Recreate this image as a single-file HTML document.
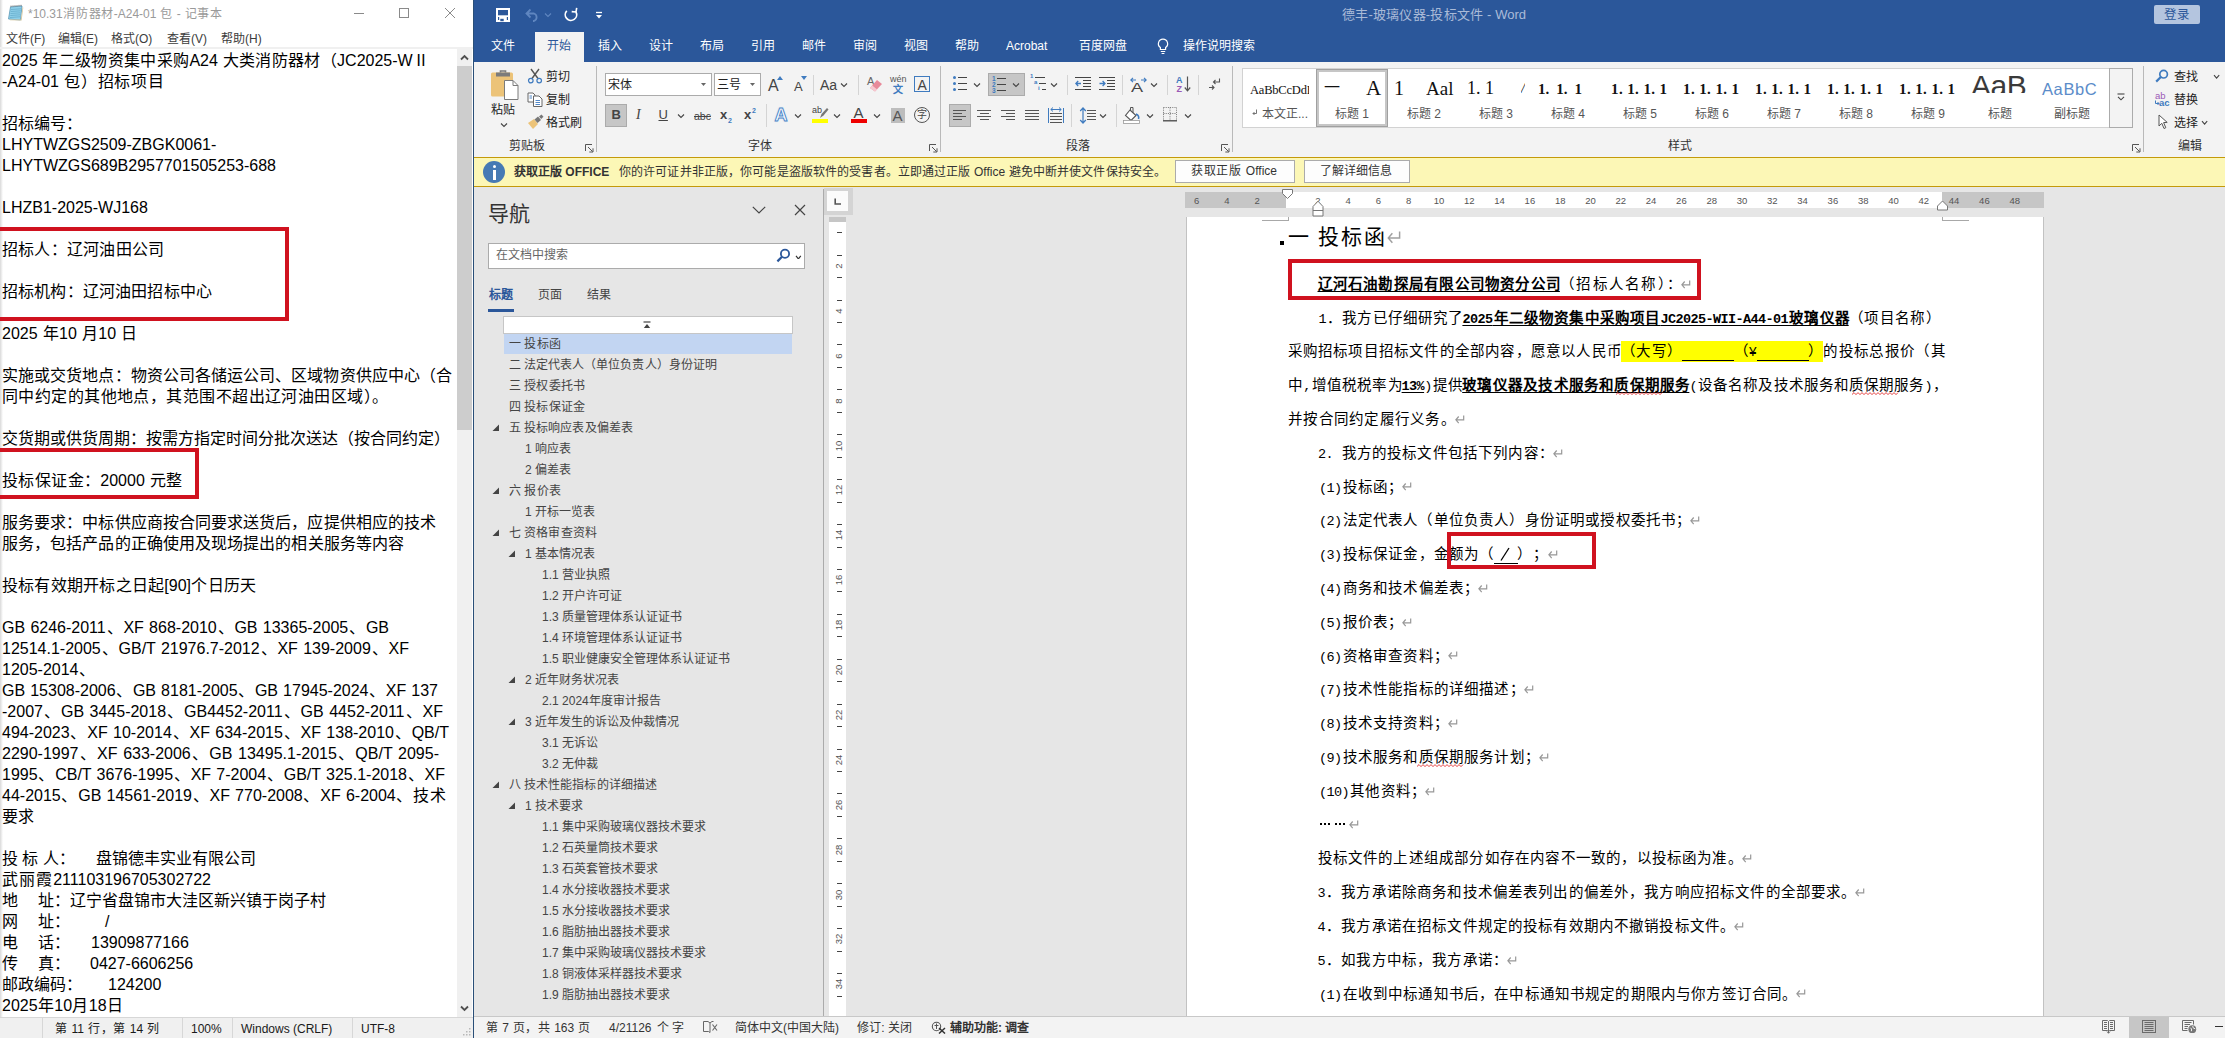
<!DOCTYPE html>
<html lang="zh-CN"><head><meta charset="utf-8"><title>screenshot</title>
<style>
html,body{margin:0;padding:0;}
body{width:2225px;height:1038px;position:relative;overflow:hidden;background:#fff;font-family:"Liberation Sans",sans-serif;}
body div,body svg{position:absolute;}
.t{white-space:nowrap;overflow:visible;}
.s{font-family:"Liberation Mono",monospace;font-size:13.5px;letter-spacing:-0.6px;}
</style></head><body>
<div style="left:0px;top:0px;width:473px;height:1038px;background:#fff;"></div>
<div style="left:0px;top:0px;width:3px;height:1038px;background:linear-gradient(90deg,#d9d9d9,#fff);"></div>
<svg style="left:7px;top:4px;" width="17" height="18" viewBox="0 0 17 18"><path d="M3.5 3 L15 2 L13.5 16 L1.5 15 Z" fill="#8fd0ea" stroke="#5a97b5" stroke-width="0.8"/><path d="M13.8 15.6 L15.6 3.2 L16.3 3.6 L14.6 16.6 L3 16.2 L2.6 15.4 Z" fill="#d8c9a0"/><path d="M4 5.5 L14 4.8 M3.8 7.5 L13.8 6.8 M3.5 9.5 L13.5 8.8 M3.3 11.5 L13.3 10.8 M3 13.5 L13 12.8" stroke="#5fa6c6" stroke-width="0.7"/><path d="M4 3 V1.6 M6 2.8 V1.4 M8 2.6 V1.2 M10 2.5 V1.1 M12 2.3 V0.9 M14 2.2 V0.8" stroke="#666" stroke-width="0.8"/></svg>
<div class="t" style="left:28px;top:5px;font-size:12px;line-height:18px;height:18px;color:#9a9a9a;width:194px;text-align-last:justify;">*10.31消防器材-A24-01 包 - 记事本</div>
<div style="left:354px;top:13px;width:10px;height:1px;background:#8a8a8a;"></div>
<div style="left:399px;top:8px;width:10px;height:10px;border:1px solid #8a8a8a;box-sizing:border-box;"></div>
<svg style="left:444px;top:7px;" width="12" height="12" viewBox="0 0 12 12"><path d="M1 1 L11 11 M11 1 L1 11" stroke="#8a8a8a" stroke-width="1" fill="none"/></svg>
<div class="t" style="left:6px;top:29.5px;font-size:12px;line-height:18px;height:18px;color:#3c3c3c;width:37px;text-align-last:justify;">文件(F)</div>
<div class="t" style="left:58px;top:29.5px;font-size:12px;line-height:18px;height:18px;color:#3c3c3c;width:38px;text-align-last:justify;">编辑(E)</div>
<div class="t" style="left:111px;top:29.5px;font-size:12px;line-height:18px;height:18px;color:#3c3c3c;width:41px;text-align-last:justify;">格式(O)</div>
<div class="t" style="left:167px;top:29.5px;font-size:12px;line-height:18px;height:18px;color:#3c3c3c;width:39px;text-align-last:justify;">查看(V)</div>
<div class="t" style="left:221px;top:29.5px;font-size:12px;line-height:18px;height:18px;color:#3c3c3c;width:40px;text-align-last:justify;">帮助(H)</div>
<div style="left:0px;top:47px;width:473px;height:2px;background:#f0f0f0;"></div>
<div style="left:457px;top:49px;width:15px;height:968px;background:#f0f0f0;"></div>
<div style="left:457px;top:66px;width:15px;height:364px;background:#cdcdcd;"></div>
<svg style="left:460px;top:54px;" width="9" height="7" viewBox="0 0 9 7"><path d="M1 5.5 L4.5 2 L8 5.5" fill="none" stroke="#505050" stroke-width="1.8"/></svg>
<svg style="left:460px;top:1005px;" width="9" height="7" viewBox="0 0 9 7"><path d="M1 1.5 L4.5 5 L8 1.5" fill="none" stroke="#505050" stroke-width="1.8"/></svg>
<div class="t" style="left:2px;top:49.5px;font-size:16px;line-height:21px;height:21px;color:#000;width:427px;text-align-last:justify;">2025 年二级物资集中采购A24 大类消防器材（JC2025-WⅡ</div>
<div class="t" style="left:2px;top:70.5px;font-size:16px;line-height:21px;height:21px;color:#000;width:162px;text-align-last:justify;">-A24-01 包）招标项目</div>
<div class="t" style="width:80.3px;text-align-last:justify;left:2px;top:112.5px;font-size:16px;line-height:21px;height:21px;color:#000;">招标编号：</div>
<div class="t" style="left:2px;top:133.5px;font-size:16px;line-height:21px;height:21px;color:#000;">LHYTWZGS2509-ZBGK0061-</div>
<div class="t" style="left:2px;top:154.5px;font-size:16px;line-height:21px;height:21px;color:#000;">LHYTWZGS689B2957701505253-688</div>
<div class="t" style="left:2px;top:196.5px;font-size:16px;line-height:21px;height:21px;color:#000;">LHZB1-2025-WJ168</div>
<div class="t" style="left:2px;top:238.5px;font-size:16px;line-height:21px;height:21px;color:#000;width:162px;text-align-last:justify;">招标人：辽河油田公司</div>
<div class="t" style="left:2px;top:280.5px;font-size:16px;line-height:21px;height:21px;color:#000;width:210px;text-align-last:justify;">招标机构：辽河油田招标中心</div>
<div class="t" style="left:2px;top:322.5px;font-size:16px;line-height:21px;height:21px;color:#000;width:135px;text-align-last:justify;">2025 年10 月10 日</div>
<div class="t" style="left:2px;top:364.5px;font-size:16px;line-height:21px;height:21px;color:#000;width:450px;text-align-last:justify;">实施或交货地点：物资公司各储运公司、区域物资供应中心（合</div>
<div class="t" style="left:2px;top:385.5px;font-size:16px;line-height:21px;height:21px;color:#000;width:386px;text-align-last:justify;">同中约定的其他地点，其范围不超出辽河油田区域）。</div>
<div class="t" style="width:448.3px;text-align-last:justify;left:2px;top:427.5px;font-size:16px;line-height:21px;height:21px;color:#000;">交货期或供货周期：按需方指定时间分批次送达（按合同约定）</div>
<div class="t" style="left:2px;top:469.5px;font-size:16px;line-height:21px;height:21px;color:#000;width:180px;text-align-last:justify;">投标保证金：20000 元整</div>
<div class="t" style="left:2px;top:511.5px;font-size:16px;line-height:21px;height:21px;color:#000;width:434px;text-align-last:justify;">服务要求：中标供应商按合同要求送货后，应提供相应的技术</div>
<div class="t" style="left:2px;top:532.5px;font-size:16px;line-height:21px;height:21px;color:#000;width:402px;text-align-last:justify;">服务，包括产品的正确使用及现场提出的相关服务等内容</div>
<div class="t" style="left:2px;top:574.5px;font-size:16px;line-height:21px;height:21px;color:#000;width:254px;text-align-last:justify;">投标有效期开标之日起[90]个日历天</div>
<div class="t" style="left:2px;top:616.5px;font-size:16px;line-height:21px;height:21px;color:#000;width:387px;text-align-last:justify;">GB 6246-2011、XF 868-2010、GB 13365-2005、GB</div>
<div class="t" style="left:2px;top:637.5px;font-size:16px;line-height:21px;height:21px;color:#000;width:407px;text-align-last:justify;">12514.1-2005、GB/T 21976.7-2012、XF 139-2009、XF</div>
<div class="t" style="width:92.8px;text-align-last:justify;left:2px;top:658.5px;font-size:16px;line-height:21px;height:21px;color:#000;">1205-2014、</div>
<div class="t" style="left:2px;top:679.5px;font-size:16px;line-height:21px;height:21px;color:#000;width:436px;text-align-last:justify;">GB 15308-2006、GB 8181-2005、GB 17945-2024、XF 137</div>
<div class="t" style="left:2px;top:700.5px;font-size:16px;line-height:21px;height:21px;color:#000;width:441px;text-align-last:justify;">-2007、GB 3445-2018、GB4452-2011、GB 4452-2011、XF</div>
<div class="t" style="left:2px;top:721.5px;font-size:16px;line-height:21px;height:21px;color:#000;width:447px;text-align-last:justify;">494-2023、XF 10-2014、XF 634-2015、XF 138-2010、QB/T</div>
<div class="t" style="left:2px;top:742.5px;font-size:16px;line-height:21px;height:21px;color:#000;width:437px;text-align-last:justify;">2290-1997、XF 633-2006、GB 13495.1-2015、QB/T 2095-</div>
<div class="t" style="left:2px;top:763.5px;font-size:16px;line-height:21px;height:21px;color:#000;width:443px;text-align-last:justify;">1995、CB/T 3676-1995、XF 7-2004、GB/T 325.1-2018、XF</div>
<div class="t" style="left:2px;top:784.5px;font-size:16px;line-height:21px;height:21px;color:#000;width:444px;text-align-last:justify;">44-2015、GB 14561-2019、XF 770-2008、XF 6-2004、技术</div>
<div class="t" style="width:32.3px;text-align-last:justify;left:2px;top:805.5px;font-size:16px;line-height:21px;height:21px;color:#000;">要求</div>
<div class="t" style="left:2px;top:847.5px;font-size:16px;line-height:21px;height:21px;color:#000;width:70px;text-align-last:justify;">投 标 人：</div>
<div class="t" style="left:96px;top:847.5px;font-size:16px;line-height:21px;height:21px;color:#000;width:160px;text-align-last:justify;">盘锦德丰实业有限公司</div>
<div class="t" style="left:2px;top:868.5px;font-size:16px;line-height:21px;height:21px;color:#000;width:209px;text-align-last:justify;">武丽霞211103196705302722</div>
<div class="t" style="left:2px;top:889.5px;font-size:16px;line-height:21px;height:21px;color:#000;">地</div>
<div class="t" style="width:32.3px;text-align-last:justify;left:38px;top:889.5px;font-size:16px;line-height:21px;height:21px;color:#000;">址：</div>
<div class="t" style="left:70px;top:889.5px;font-size:16px;line-height:21px;height:21px;color:#000;width:256px;text-align-last:justify;">辽宁省盘锦市大洼区新兴镇于岗子村</div>
<div class="t" style="left:2px;top:910.5px;font-size:16px;line-height:21px;height:21px;color:#000;">网</div>
<div class="t" style="width:32.3px;text-align-last:justify;left:38px;top:910.5px;font-size:16px;line-height:21px;height:21px;color:#000;">址：</div>
<div class="t" style="left:105px;top:910.5px;font-size:16px;line-height:21px;height:21px;color:#000;">/</div>
<div class="t" style="left:2px;top:931.5px;font-size:16px;line-height:21px;height:21px;color:#000;">电</div>
<div class="t" style="width:32.3px;text-align-last:justify;left:38px;top:931.5px;font-size:16px;line-height:21px;height:21px;color:#000;">话：</div>
<div class="t" style="left:91px;top:931.5px;font-size:16px;line-height:21px;height:21px;color:#000;">13909877166</div>
<div class="t" style="left:2px;top:952.5px;font-size:16px;line-height:21px;height:21px;color:#000;">传</div>
<div class="t" style="width:32.3px;text-align-last:justify;left:38px;top:952.5px;font-size:16px;line-height:21px;height:21px;color:#000;">真：</div>
<div class="t" style="left:90px;top:952.5px;font-size:16px;line-height:21px;height:21px;color:#000;">0427-6606256</div>
<div class="t" style="width:80.3px;text-align-last:justify;left:2px;top:973.5px;font-size:16px;line-height:21px;height:21px;color:#000;">邮政编码：</div>
<div class="t" style="left:108px;top:973.5px;font-size:16px;line-height:21px;height:21px;color:#000;">124200</div>
<div class="t" style="left:2px;top:994.5px;font-size:16px;line-height:21px;height:21px;color:#000;width:121px;text-align-last:justify;">2025年10月18日</div>
<div style="left:-6px;top:227px;width:295px;height:94px;border:4px solid #d0121f;box-sizing:border-box;"></div>
<div style="left:-6px;top:448px;width:205px;height:51px;border:4px solid #d0121f;box-sizing:border-box;"></div>
<div style="left:0px;top:1017px;width:473px;height:21px;background:#f0f0f0;border-top:1px solid #d7d7d7;box-sizing:border-box;"></div>
<div style="left:42px;top:1018px;width:1px;height:20px;background:#d7d7d7;"></div>
<div style="left:182px;top:1018px;width:1px;height:20px;background:#d7d7d7;"></div>
<div style="left:232px;top:1018px;width:1px;height:20px;background:#d7d7d7;"></div>
<div style="left:352px;top:1018px;width:1px;height:20px;background:#d7d7d7;"></div>
<div class="t" style="left:55px;top:1019.5px;font-size:12px;line-height:18px;height:18px;color:#1a1a1a;width:104px;text-align-last:justify;">第 11 行，第 14 列</div>
<div class="t" style="left:191px;top:1019.5px;font-size:12px;line-height:18px;height:18px;color:#1a1a1a;">100%</div>
<div class="t" style="left:241px;top:1019.5px;font-size:12px;line-height:18px;height:18px;color:#1a1a1a;">Windows (CRLF)</div>
<div class="t" style="left:361px;top:1019.5px;font-size:12px;line-height:18px;height:18px;color:#1a1a1a;">UTF-8</div>
<svg style="left:462px;top:1027px;" width="10" height="10" viewBox="0 0 10 10"><rect x="7" y="1" width="1.5" height="1.5" fill="#b8b8b8"/><rect x="4" y="4" width="1.5" height="1.5" fill="#b8b8b8"/><rect x="7" y="4" width="1.5" height="1.5" fill="#b8b8b8"/><rect x="1" y="7" width="1.5" height="1.5" fill="#b8b8b8"/><rect x="4" y="7" width="1.5" height="1.5" fill="#b8b8b8"/><rect x="7" y="7" width="1.5" height="1.5" fill="#b8b8b8"/></svg>
<div style="left:473px;top:0px;width:1px;height:1038px;background:#2a4f78;"></div>
<div style="left:474px;top:0px;width:1751px;height:62px;background:#2b579a;"></div>
<svg style="left:496px;top:8px;" width="14" height="14" viewBox="0 0 14 14"><path d="M1 1 H13 V13 H1 Z" fill="none" stroke="#fff" stroke-width="2"/><rect x="2" y="7.3" width="10" height="1.7" fill="#fff"/><rect x="3.2" y="8.9" width="7.6" height="4.1" fill="#fff"/><rect x="4.3" y="10.8" width="3.4" height="2.4" fill="#2b579a"/></svg>
<svg style="left:525px;top:8px;" width="15" height="14" viewBox="0 0 15 14"><path d="M5.5 1.5 L1.5 5.5 L5.5 9.5 M2 5.5 H9 A4 4 0 0 1 9 13 H8" fill="none" stroke="#5f86c0" stroke-width="1.8"/></svg>
<svg style="left:544px;top:12px;" width="8" height="6" viewBox="0 0 8 6"><path d="M1 1.5 L4 4.5 L7 1.5" fill="none" stroke="#5f86c0" stroke-width="1.1"/></svg>
<svg style="left:563px;top:7px;" width="16" height="15" viewBox="0 0 16 15"><path d="M12.96 4.99 A5.7 5.7 0 1 1 3.8 3.8" fill="none" stroke="#fff" stroke-width="1.7"/><path d="M13.7 0.9 L13 5 L8.7 4.6" fill="none" stroke="#fff" stroke-width="1.6"/></svg>
<svg style="left:595px;top:11px;" width="8" height="9" viewBox="0 0 8 9"><path d="M1 1.5 H7" stroke="#fff" stroke-width="1.3"/><path d="M1 4 L4 7.5 L7 4 Z" fill="#fff"/></svg>
<div class="t" style="left:1342px;top:4.5px;font-size:13px;line-height:20px;height:20px;color:#aabbd8;width:184px;text-align-last:justify;">德丰-玻璃仪器-投标文件  -  Word</div>
<div style="left:2154px;top:5px;width:46px;height:19px;background:#b4c5df;border-radius:2px;"></div>
<div class="t" style="left:2164px;top:5.5px;font-size:12.5px;line-height:18px;height:18px;color:#2b579a;width:25px;text-align-last:justify;">登录</div>
<div style="left:535px;top:32px;width:49px;height:30px;background:#f3f3f3;"></div>
<div class="t" style="left:491px;top:37.2px;font-size:12px;line-height:18px;height:18px;color:#fff;width:24px;text-align-last:justify;">文件</div>
<div class="t" style="left:547px;top:37.2px;font-size:12px;line-height:18px;height:18px;color:#2b579a;width:24px;text-align-last:justify;">开始</div>
<div class="t" style="left:598px;top:37.2px;font-size:12px;line-height:18px;height:18px;color:#fff;width:24px;text-align-last:justify;">插入</div>
<div class="t" style="left:649px;top:37.2px;font-size:12px;line-height:18px;height:18px;color:#fff;width:24px;text-align-last:justify;">设计</div>
<div class="t" style="left:700px;top:37.2px;font-size:12px;line-height:18px;height:18px;color:#fff;width:24px;text-align-last:justify;">布局</div>
<div class="t" style="left:751px;top:37.2px;font-size:12px;line-height:18px;height:18px;color:#fff;width:24px;text-align-last:justify;">引用</div>
<div class="t" style="left:802px;top:37.2px;font-size:12px;line-height:18px;height:18px;color:#fff;width:24px;text-align-last:justify;">邮件</div>
<div class="t" style="left:853px;top:37.2px;font-size:12px;line-height:18px;height:18px;color:#fff;width:24px;text-align-last:justify;">审阅</div>
<div class="t" style="left:904px;top:37.2px;font-size:12px;line-height:18px;height:18px;color:#fff;width:24px;text-align-last:justify;">视图</div>
<div class="t" style="left:955px;top:37.2px;font-size:12px;line-height:18px;height:18px;color:#fff;width:24px;text-align-last:justify;">帮助</div>
<div class="t" style="left:1006px;top:37.2px;font-size:12px;line-height:18px;height:18px;color:#fff;width:46px;text-align-last:justify;">Acrobat</div>
<div class="t" style="left:1079px;top:37.2px;font-size:12px;line-height:18px;height:18px;color:#fff;width:48px;text-align-last:justify;">百度网盘</div>
<div class="t" style="left:1183px;top:37.2px;font-size:12px;line-height:18px;height:18px;color:#fff;width:72px;text-align-last:justify;">操作说明搜索</div>
<svg style="left:1156px;top:38px;" width="14" height="17" viewBox="0 0 14 17"><path d="M7 1.2 A4.6 4.6 0 0 1 9.6 9.6 V11.5 H4.4 V9.6 A4.6 4.6 0 0 1 7 1.2 Z" fill="none" stroke="#fff" stroke-width="1.2"/><path d="M4.8 13.5 H9.2 M5.6 15.5 H8.4" stroke="#fff" stroke-width="1.2"/></svg>
<div style="left:474px;top:62px;width:1751px;height:95px;background:#f3f3f3;"></div>
<div style="left:596px;top:66px;width:1px;height:86px;background:#b9b9b9;"></div>
<div style="left:940px;top:66px;width:1px;height:86px;background:#b9b9b9;"></div>
<div style="left:1232px;top:66px;width:1px;height:86px;background:#b9b9b9;"></div>
<div style="left:2143px;top:66px;width:1px;height:86px;background:#b9b9b9;"></div>
<div class="t" style="left:509px;top:137px;font-size:12px;line-height:18px;height:18px;color:#333;width:36px;text-align-last:justify;">剪贴板</div>
<div class="t" style="left:748px;top:137px;font-size:12px;line-height:18px;height:18px;color:#333;width:24px;text-align-last:justify;">字体</div>
<div class="t" style="left:1066px;top:137px;font-size:12px;line-height:18px;height:18px;color:#333;width:24px;text-align-last:justify;">段落</div>
<div class="t" style="left:1668px;top:137px;font-size:12px;line-height:18px;height:18px;color:#333;width:24px;text-align-last:justify;">样式</div>
<div class="t" style="left:2178px;top:137px;font-size:12px;line-height:18px;height:18px;color:#333;width:24px;text-align-last:justify;">编辑</div>
<svg style="left:585px;top:144px;" width="9" height="9" viewBox="0 0 9 9"><path d="M0.5 7 V0.5 H7" fill="none" stroke="#555" stroke-width="1"/><path d="M3 3 L7.5 7.5 M4.3 8 H8 V4.3" fill="none" stroke="#555" stroke-width="1"/></svg>
<svg style="left:929px;top:144px;" width="9" height="9" viewBox="0 0 9 9"><path d="M0.5 7 V0.5 H7" fill="none" stroke="#555" stroke-width="1"/><path d="M3 3 L7.5 7.5 M4.3 8 H8 V4.3" fill="none" stroke="#555" stroke-width="1"/></svg>
<svg style="left:1221px;top:144px;" width="9" height="9" viewBox="0 0 9 9"><path d="M0.5 7 V0.5 H7" fill="none" stroke="#555" stroke-width="1"/><path d="M3 3 L7.5 7.5 M4.3 8 H8 V4.3" fill="none" stroke="#555" stroke-width="1"/></svg>
<svg style="left:2132px;top:144px;" width="9" height="9" viewBox="0 0 9 9"><path d="M0.5 7 V0.5 H7" fill="none" stroke="#555" stroke-width="1"/><path d="M3 3 L7.5 7.5 M4.3 8 H8 V4.3" fill="none" stroke="#555" stroke-width="1"/></svg>
<svg style="left:490px;top:69px;" width="30" height="32" viewBox="0 0 30 32"><rect x="1" y="3.5" width="22" height="24" rx="1.5" fill="#ecc378"/><rect x="6" y="3.5" width="14" height="4" fill="#7b7b7b"/><path d="M10.5 3.5 V2 H15.5 V3.5" fill="none" stroke="#7b7b7b" stroke-width="1.6"/><path d="M14.5 11.5 H23 L28 16.5 V30.5 H14.5 Z" fill="#fff" stroke="#7b7b7b" stroke-width="1"/><path d="M23 11.5 V16.5 H28" fill="none" stroke="#7b7b7b" stroke-width="1"/></svg>
<div class="t" style="left:491px;top:101px;font-size:12px;line-height:18px;height:18px;color:#222;width:24px;text-align-last:justify;">粘贴</div>
<svg style="left:500px;top:121.5px;" width="8" height="6" viewBox="0 0 8 6"><path d="M1 1.5 L4 4.5 L7 1.5" fill="none" stroke="#444" stroke-width="1.1"/></svg>
<svg style="left:527px;top:68px;" width="16" height="16" viewBox="0 0 16 16"><path d="M4 1 L11 10.5 M12 1 L5 10.5" stroke="#555" stroke-width="1.4" fill="none"/><circle cx="3.8" cy="12.6" r="2.3" fill="none" stroke="#3f7bbf" stroke-width="1.2"/><circle cx="12.2" cy="12.6" r="2.3" fill="none" stroke="#3f7bbf" stroke-width="1.2"/></svg>
<div class="t" style="left:546px;top:67.5px;font-size:12px;line-height:18px;height:18px;color:#222;width:24px;text-align-last:justify;">剪切</div>
<svg style="left:527px;top:92px;" width="16" height="15" viewBox="0 0 16 15"><path d="M1 1 H6 L8 3 V10 H1 Z" fill="#fff" stroke="#666" stroke-width="1"/><path d="M6.5 4 H12 L15 7 V14.5 H6.5 Z" fill="#fff" stroke="#666" stroke-width="1"/><path d="M8.5 8.5 H13 M8.5 10.5 H13 M8.5 12.5 H13 M2.5 4 H5 M2.5 6 H5" stroke="#3f7bbf" stroke-width="0.9"/></svg>
<div class="t" style="left:546px;top:91px;font-size:12px;line-height:18px;height:18px;color:#222;width:24px;text-align-last:justify;">复制</div>
<svg style="left:527px;top:114px;" width="17" height="16" viewBox="0 0 17 16"><path d="M1 9 L7 5 L11 10 L6 15 Z" fill="#ecc378"/><path d="M7.5 5.5 L11 2.5 L14 6 L10.5 9 Z" fill="#777"/><path d="M12 2.5 L14.5 0.5 L16.5 2.8 L14.2 5 Z" fill="#777"/></svg>
<div class="t" style="left:546px;top:114px;font-size:12px;line-height:18px;height:18px;color:#222;width:36px;text-align-last:justify;">格式刷</div>
<div style="left:605px;top:73px;width:107px;height:23px;background:#fff;border:1px solid #ababab;box-sizing:border-box;"></div>
<div class="t" style="left:608px;top:75.5px;font-size:12px;line-height:18px;height:18px;color:#222;width:24px;text-align-last:justify;">宋体</div>
<svg style="left:701px;top:83px;" width="5" height="3" viewBox="0 0 5 3"><path d="M0 0 H5 L2.5 3 Z" fill="#666"/></svg>
<div style="left:714px;top:73px;width:47px;height:23px;background:#fff;border:1px solid #ababab;box-sizing:border-box;"></div>
<div class="t" style="left:717px;top:75.5px;font-size:12px;line-height:18px;height:18px;color:#222;width:24px;text-align-last:justify;">三号</div>
<svg style="left:750px;top:83px;" width="5" height="3" viewBox="0 0 5 3"><path d="M0 0 H5 L2.5 3 Z" fill="#666"/></svg>
<div class="t" style="left:768px;top:77px;font-size:16px;line-height:18px;height:18px;color:#444;">A</div>
<svg style="left:777px;top:76px;" width="6" height="4" viewBox="0 0 6 4"><path d="M0 4 H6 L3 0 Z" fill="#3f7bbf"/></svg>
<div class="t" style="left:794px;top:78px;font-size:13px;line-height:18px;height:18px;color:#444;">A</div>
<svg style="left:801px;top:76px;" width="6" height="4" viewBox="0 0 6 4"><path d="M0 0 H6 L3 4 Z" fill="#3f7bbf"/></svg>
<div style="left:813px;top:75px;width:1px;height:20px;background:#d4d4d4;"></div>
<div class="t" style="left:820px;top:75.5px;font-size:14px;line-height:18px;height:18px;color:#444;">Aa</div>
<svg style="left:840px;top:82px;" width="8" height="6" viewBox="0 0 8 6"><path d="M1 1.5 L4 4.5 L7 1.5" fill="none" stroke="#444" stroke-width="1.1"/></svg>
<div style="left:858px;top:75px;width:1px;height:20px;background:#d4d4d4;"></div>
<div class="t" style="left:867px;top:74px;font-size:11px;line-height:14px;height:14px;color:#666;">A</div>
<svg style="left:869px;top:79px;" width="14" height="13" viewBox="0 0 14 13"><path d="M1 9 L8 1 L13 5 L6 12.5 Z" fill="#e88a9a"/><path d="M1 9 L3.2 6.5 L8.2 10.5 L6 12.5 Z" fill="#f6c9d0"/></svg>
<div class="t" style="width:16.8px;text-align-last:justify;left:890px;top:74px;font-size:9px;line-height:11px;height:11px;color:#555;">wén</div>
<div class="t" style="left:893px;top:83.5px;font-size:10px;line-height:11px;height:11px;color:#3f7bbf;font-weight:bold;">文</div>
<div style="left:914px;top:76px;width:16px;height:16px;border:1px solid #3f7bbf;box-sizing:border-box;"></div>
<div class="t" style="left:917.5px;top:76.5px;font-size:14px;line-height:16px;height:16px;color:#444;">A</div>
<div style="left:605px;top:104px;width:22px;height:23px;background:#c6c6c6;border:1px solid #ababab;box-sizing:border-box;"></div>
<div class="t" style="left:611.5px;top:106px;font-size:13px;line-height:18px;height:18px;color:#444;font-weight:bold;">B</div>
<div class="t" style="left:636px;top:106px;font-size:14px;line-height:18px;height:18px;color:#444;font-family:'Liberation Serif', serif;font-style:italic;">I</div>
<div class="t" style="left:658.5px;top:105.5px;font-size:13px;line-height:18px;height:18px;color:#444;text-decoration:underline;">U</div>
<svg style="left:677px;top:112.5px;" width="8" height="6" viewBox="0 0 8 6"><path d="M1 1.5 L4 4.5 L7 1.5" fill="none" stroke="#444" stroke-width="1.1"/></svg>
<div class="t" style="left:694px;top:108.5px;font-size:10.5px;line-height:14px;height:14px;color:#444;text-decoration:line-through;">abc</div>
<div class="t" style="left:720px;top:106px;font-size:13px;line-height:18px;height:18px;color:#444;font-weight:bold;">x</div>
<div class="t" style="left:728px;top:115.5px;font-size:7px;line-height:9px;height:9px;color:#3f7bbf;font-weight:bold;">2</div>
<div class="t" style="left:744px;top:106px;font-size:13px;line-height:18px;height:18px;color:#444;font-weight:bold;">x</div>
<div class="t" style="left:752px;top:105.5px;font-size:7px;line-height:9px;height:9px;color:#3f7bbf;font-weight:bold;">2</div>
<div style="left:766px;top:104px;width:1px;height:23px;background:#d4d4d4;"></div>
<div class="t" style="left:774.5px;top:104.5px;font-size:18px;line-height:20px;height:20px;color:#fafcff;font-weight:bold;-webkit-text-stroke:0.9px #4a86c8;text-shadow:0 0 2px #a9c7ea;">A</div>
<svg style="left:793.5px;top:112.5px;" width="8" height="6" viewBox="0 0 8 6"><path d="M1 1.5 L4 4.5 L7 1.5" fill="none" stroke="#444" stroke-width="1.1"/></svg>
<div class="t" style="left:812px;top:104.5px;font-size:9px;line-height:11px;height:11px;color:#444;">ab</div>
<svg style="left:817px;top:107px;" width="12" height="12" viewBox="0 0 12 12"><path d="M3 11 L4.5 7 L10 1 L11.5 2.5 L6.5 8.5 Z" fill="#777"/></svg>
<div style="left:812px;top:119px;width:16px;height:4px;background:#ffff00;"></div>
<svg style="left:833px;top:112.5px;" width="8" height="6" viewBox="0 0 8 6"><path d="M1 1.5 L4 4.5 L7 1.5" fill="none" stroke="#444" stroke-width="1.1"/></svg>
<div class="t" style="left:853.5px;top:103.5px;font-size:15px;line-height:18px;height:18px;color:#444;">A</div>
<div style="left:851px;top:119px;width:16px;height:4px;background:#ee0000;"></div>
<svg style="left:872.5px;top:112.5px;" width="8" height="6" viewBox="0 0 8 6"><path d="M1 1.5 L4 4.5 L7 1.5" fill="none" stroke="#444" stroke-width="1.1"/></svg>
<div style="left:891px;top:108px;width:14px;height:15px;background:#bdbdbd;"></div>
<div class="t" style="left:892.5px;top:107.5px;font-size:15px;line-height:16px;height:16px;color:#555;">A</div>
<div style="left:914px;top:107px;width:16px;height:16px;border:1px solid #555;box-sizing:border-box;border-radius:8px;"></div>
<div class="t" style="left:917px;top:109px;font-size:10px;line-height:12px;height:12px;color:#444;">字</div>
<div style="left:953px;top:76px;width:3px;height:3px;background:#3f7bbf;border-radius:2px;"></div>
<div style="left:958px;top:77px;width:9px;height:1px;background:#444;"></div>
<div style="left:953px;top:82px;width:3px;height:3px;background:#3f7bbf;border-radius:2px;"></div>
<div style="left:958px;top:83px;width:9px;height:1px;background:#444;"></div>
<div style="left:953px;top:88px;width:3px;height:3px;background:#3f7bbf;border-radius:2px;"></div>
<div style="left:958px;top:89px;width:9px;height:1px;background:#444;"></div>
<svg style="left:973px;top:82px;" width="8" height="6" viewBox="0 0 8 6"><path d="M1 1.5 L4 4.5 L7 1.5" fill="none" stroke="#444" stroke-width="1.1"/></svg>
<div style="left:988px;top:73px;width:37px;height:23px;background:#c6c6c6;border:1px solid #ababab;box-sizing:border-box;"></div>
<div class="t" style="left:992px;top:74.5px;font-size:6.5px;line-height:7px;height:7px;color:#3f7bbf;font-weight:bold;">1</div>
<div style="left:997px;top:78px;width:9px;height:1px;background:#444;"></div>
<div class="t" style="left:992px;top:80.5px;font-size:6.5px;line-height:7px;height:7px;color:#3f7bbf;font-weight:bold;">2</div>
<div style="left:997px;top:84px;width:9px;height:1px;background:#444;"></div>
<div class="t" style="left:992px;top:86.5px;font-size:6.5px;line-height:7px;height:7px;color:#3f7bbf;font-weight:bold;">3</div>
<div style="left:997px;top:90px;width:9px;height:1px;background:#444;"></div>
<svg style="left:1012px;top:82px;" width="8" height="6" viewBox="0 0 8 6"><path d="M1 1.5 L4 4.5 L7 1.5" fill="none" stroke="#444" stroke-width="1.1"/></svg>
<div class="t" style="left:1030px;top:73px;font-size:6px;line-height:7px;height:7px;color:#3f7bbf;font-weight:bold;">1</div>
<div style="left:1035px;top:77px;width:10px;height:1px;background:#444;"></div>
<div class="t" style="left:1034px;top:79px;font-size:6px;line-height:7px;height:7px;color:#3f7bbf;font-weight:bold;">a</div>
<div style="left:1039px;top:83px;width:7px;height:1px;background:#444;"></div>
<div class="t" style="left:1038px;top:85px;font-size:6px;line-height:7px;height:7px;color:#3f7bbf;font-weight:bold;">i</div>
<div style="left:1042px;top:89px;width:4px;height:1px;background:#444;"></div>
<svg style="left:1049.5px;top:82px;" width="8" height="6" viewBox="0 0 8 6"><path d="M1 1.5 L4 4.5 L7 1.5" fill="none" stroke="#444" stroke-width="1.1"/></svg>
<div style="left:1067px;top:75px;width:1px;height:20px;background:#d4d4d4;"></div>
<div style="left:1075px;top:77px;width:16px;height:1px;background:#444;"></div>
<div style="left:1083px;top:80px;width:8px;height:1px;background:#444;"></div>
<div style="left:1083px;top:83px;width:8px;height:1px;background:#444;"></div>
<div style="left:1083px;top:86px;width:8px;height:1px;background:#444;"></div>
<div style="left:1075px;top:89px;width:16px;height:1px;background:#444;"></div>
<svg style="left:1075px;top:80px;" width="7" height="7" viewBox="0 0 7 7"><path d="M6 3.5 H1 M3.2 1 L0.8 3.5 L3.2 6" fill="none" stroke="#3f7bbf" stroke-width="1.3"/></svg>
<div style="left:1099px;top:77px;width:16px;height:1px;background:#444;"></div>
<div style="left:1107px;top:80px;width:8px;height:1px;background:#444;"></div>
<div style="left:1107px;top:83px;width:8px;height:1px;background:#444;"></div>
<div style="left:1107px;top:86px;width:8px;height:1px;background:#444;"></div>
<div style="left:1099px;top:89px;width:16px;height:1px;background:#444;"></div>
<svg style="left:1099px;top:80px;" width="7" height="7" viewBox="0 0 7 7"><path d="M0.5 3.5 H6 M3.6 1 L6 3.5 L3.6 6" fill="none" stroke="#3f7bbf" stroke-width="1.3"/></svg>
<div style="left:1122px;top:75px;width:1px;height:20px;background:#d4d4d4;"></div>
<div class="t" style="left:1130.5px;top:81px;font-size:12.5px;line-height:14px;height:14px;color:#444;transform:scaleX(1.45);transform-origin:left;">A</div>
<svg style="left:1130px;top:77px;" width="17" height="6" viewBox="0 0 17 6"><path d="M0.8 3 H6 M3 0.8 L0.8 3 L3 5.2 M11 3 H16.2 M14 0.8 L16.2 3 L14 5.2" fill="none" stroke="#3f7bbf" stroke-width="1.1"/></svg>
<svg style="left:1149.5px;top:82px;" width="8" height="6" viewBox="0 0 8 6"><path d="M1 1.5 L4 4.5 L7 1.5" fill="none" stroke="#444" stroke-width="1.1"/></svg>
<div style="left:1167px;top:75px;width:1px;height:20px;background:#d4d4d4;"></div>
<div class="t" style="left:1176px;top:74.5px;font-size:9px;line-height:10px;height:10px;color:#3f7bbf;font-weight:bold;">A</div>
<div class="t" style="left:1176.5px;top:83.5px;font-size:9px;line-height:10px;height:10px;color:#9b59b6;font-weight:bold;">Z</div>
<svg style="left:1184px;top:76px;" width="7" height="16" viewBox="0 0 7 16"><path d="M3.5 0.5 V14.5 M0.8 11.5 L3.5 14.8 L6.2 11.5" fill="none" stroke="#555" stroke-width="1.2"/></svg>
<div style="left:1198px;top:75px;width:1px;height:20px;background:#d4d4d4;"></div>
<svg style="left:1208px;top:78px;" width="13" height="13" viewBox="0 0 13 13"><path d="M11.5 0.5 V4 H5.5 M7.5 2 L5.5 4 L7.5 6" fill="none" stroke="#555" stroke-width="1.1"/><path d="M1 9.5 H6 M4 7.5 L6 9.5 L4 11.5" fill="none" stroke="#555" stroke-width="1.1"/></svg>
<div style="left:949px;top:104px;width:22px;height:23px;background:#c6c6c6;border:1px solid #ababab;box-sizing:border-box;"></div>
<div style="left:953px;top:110px;width:13px;height:1px;background:#555;"></div>
<div style="left:953px;top:113px;width:9px;height:1px;background:#555;"></div>
<div style="left:953px;top:116px;width:13px;height:1px;background:#555;"></div>
<div style="left:953px;top:119px;width:9px;height:1px;background:#555;"></div>
<div style="left:977.0px;top:110px;width:14px;height:1px;background:#555;"></div>
<div style="left:979.5px;top:113px;width:9px;height:1px;background:#555;"></div>
<div style="left:977.0px;top:116px;width:14px;height:1px;background:#555;"></div>
<div style="left:979.5px;top:119px;width:9px;height:1px;background:#555;"></div>
<div style="left:1001px;top:110px;width:14px;height:1px;background:#555;"></div>
<div style="left:1006px;top:113px;width:9px;height:1px;background:#555;"></div>
<div style="left:1001px;top:116px;width:14px;height:1px;background:#555;"></div>
<div style="left:1006px;top:119px;width:9px;height:1px;background:#555;"></div>
<div style="left:1025px;top:110px;width:14px;height:1px;background:#555;"></div>
<div style="left:1025px;top:113px;width:14px;height:1px;background:#555;"></div>
<div style="left:1025px;top:116px;width:14px;height:1px;background:#555;"></div>
<div style="left:1025px;top:119px;width:14px;height:1px;background:#555;"></div>
<div style="left:1048px;top:108px;width:1px;height:15px;background:#3f7bbf;"></div>
<div style="left:1063px;top:108px;width:1px;height:15px;background:#3f7bbf;"></div>
<svg style="left:1050px;top:107px;" width="12" height="5" viewBox="0 0 12 5"><path d="M0.8 2.5 H11.2 M3 0.5 L0.8 2.5 L3 4.5 M9 0.5 L11.2 2.5 L9 4.5" fill="none" stroke="#3f7bbf" stroke-width="1"/></svg>
<div style="left:1050px;top:113px;width:12px;height:1px;background:#555;"></div>
<div style="left:1050px;top:116px;width:12px;height:1px;background:#555;"></div>
<div style="left:1050px;top:119px;width:12px;height:1px;background:#555;"></div>
<div style="left:1050px;top:122px;width:12px;height:1px;background:#555;"></div>
<div style="left:1071px;top:104px;width:1px;height:23px;background:#d4d4d4;"></div>
<svg style="left:1079px;top:107px;" width="8" height="17" viewBox="0 0 8 17"><path d="M4 1 V16 M1.2 4 L4 1 L6.8 4 M1.2 13 L4 16 L6.8 13" fill="none" stroke="#3f7bbf" stroke-width="1.2"/></svg>
<div style="left:1087px;top:110px;width:9px;height:1px;background:#555;"></div>
<div style="left:1087px;top:113px;width:9px;height:1px;background:#555;"></div>
<div style="left:1087px;top:116px;width:9px;height:1px;background:#555;"></div>
<div style="left:1087px;top:119px;width:9px;height:1px;background:#555;"></div>
<svg style="left:1098.5px;top:112.5px;" width="8" height="6" viewBox="0 0 8 6"><path d="M1 1.5 L4 4.5 L7 1.5" fill="none" stroke="#444" stroke-width="1.1"/></svg>
<div style="left:1116px;top:104px;width:1px;height:23px;background:#d4d4d4;"></div>
<svg style="left:1123px;top:106px;" width="18" height="18" viewBox="0 0 18 18"><path d="M7 4 L13 9.5 L8 14.5 L2.5 9.5 Z" fill="#fff" stroke="#555" stroke-width="1.1"/><path d="M7.5 5 V1.5 H10 V6.8" fill="none" stroke="#555" stroke-width="1"/><path d="M13 8 Q16.5 9.5 15.5 13" fill="none" stroke="#3f7bbf" stroke-width="1.6"/><rect x="0.5" y="14.5" width="16" height="3" fill="#fff" stroke="#999" stroke-width="0.8"/></svg>
<svg style="left:1145.5px;top:112.5px;" width="8" height="6" viewBox="0 0 8 6"><path d="M1 1.5 L4 4.5 L7 1.5" fill="none" stroke="#444" stroke-width="1.1"/></svg>
<svg style="left:1163px;top:107px;" width="14" height="15" viewBox="0 0 14 15"><path d="M0.5 0.5 H13.5 M0.5 0.5 V13 M13.5 0.5 V13 M7 0.5 V13 M0.5 6.5 H13.5" fill="none" stroke="#777" stroke-width="1" stroke-dasharray="1 1.2"/><path d="M0 13.8 H14" stroke="#444" stroke-width="1.3"/></svg>
<svg style="left:1184px;top:112.5px;" width="8" height="6" viewBox="0 0 8 6"><path d="M1 1.5 L4 4.5 L7 1.5" fill="none" stroke="#444" stroke-width="1.1"/></svg>
<div style="left:1242px;top:68px;width:891px;height:60px;background:#fff;border:1px solid #d2d2d2;box-sizing:border-box;"></div>
<div style="left:1316px;top:69px;width:72px;height:58px;background:#fff;border:1px solid #a0a0a0;box-sizing:border-box;box-shadow:inset 0 0 0 2px #c6c6c6;"></div>
<svg style="left:1252px;top:109px;" width="6" height="7" viewBox="0 0 6 7"><path d="M4.5 0.5 V4.5 H1 M2.5 3 L1 4.5 L2.5 6" fill="none" stroke="#666" stroke-width="0.9"/></svg>
<div class="t" style="left:1262px;top:104.7px;font-size:12px;line-height:18px;height:18px;color:#555;width:46px;text-align-last:justify;">本文正...</div>
<div class="t" style="left:1335.0px;top:104.7px;font-size:12px;line-height:18px;height:18px;color:#555;width:34px;text-align-last:justify;">标题 1</div>
<div class="t" style="left:1407.0px;top:104.7px;font-size:12px;line-height:18px;height:18px;color:#555;width:34px;text-align-last:justify;">标题 2</div>
<div class="t" style="left:1479.0px;top:104.7px;font-size:12px;line-height:18px;height:18px;color:#555;width:34px;text-align-last:justify;">标题 3</div>
<div class="t" style="left:1551.0px;top:104.7px;font-size:12px;line-height:18px;height:18px;color:#555;width:34px;text-align-last:justify;">标题 4</div>
<div class="t" style="left:1623.0px;top:104.7px;font-size:12px;line-height:18px;height:18px;color:#555;width:34px;text-align-last:justify;">标题 5</div>
<div class="t" style="left:1695.0px;top:104.7px;font-size:12px;line-height:18px;height:18px;color:#555;width:34px;text-align-last:justify;">标题 6</div>
<div class="t" style="left:1767.0px;top:104.7px;font-size:12px;line-height:18px;height:18px;color:#555;width:34px;text-align-last:justify;">标题 7</div>
<div class="t" style="left:1839.0px;top:104.7px;font-size:12px;line-height:18px;height:18px;color:#555;width:34px;text-align-last:justify;">标题 8</div>
<div class="t" style="left:1911.0px;top:104.7px;font-size:12px;line-height:18px;height:18px;color:#555;width:34px;text-align-last:justify;">标题 9</div>
<div class="t" style="left:1988.0px;top:104.7px;font-size:12px;line-height:18px;height:18px;color:#555;width:24px;text-align-last:justify;">标题</div>
<div class="t" style="left:2054.0px;top:104.7px;font-size:12px;line-height:18px;height:18px;color:#555;width:36px;text-align-last:justify;">副标题</div>
<div class="t" style="left:1250px;top:80.5px;font-size:12.5px;line-height:18px;height:18px;color:#111;font-family:'Liberation Serif', serif;width:59px;overflow:hidden;letter-spacing:-0.2px;">AaBbCcDdE</div>
<div class="t" style="left:1324px;top:77px;font-size:16px;line-height:22px;height:22px;color:#111;">一</div>
<div class="t" style="left:1366px;top:76px;font-size:21px;line-height:24px;height:24px;color:#111;font-family:'Liberation Serif', serif;">A</div>
<div class="t" style="left:1394px;top:76px;font-size:20px;line-height:24px;height:24px;color:#111;font-family:'Liberation Serif', serif;">1</div>
<div class="t" style="left:1426px;top:76.5px;font-size:19px;line-height:24px;height:24px;color:#111;font-family:'Liberation Serif', serif;width:28px;overflow:hidden;">Aal</div>
<div class="t" style="left:1467px;top:76px;font-size:18px;line-height:24px;height:24px;color:#111;font-family:'Liberation Serif', serif;">1. 1</div>
<div class="t" style="left:1521px;top:77px;font-size:14px;line-height:24px;height:24px;color:#111;font-family:'Liberation Serif', serif;font-style:italic;width:4px;overflow:hidden;">/</div>
<div class="t" style="left:1538px;top:77px;font-size:15px;line-height:24px;height:24px;color:#111;width:44px;text-align-last:justify;font-weight:bold;font-family:'Liberation Serif', serif;">1. 1. 1</div>
<div class="t" style="left:1611px;top:77px;font-size:15px;line-height:24px;height:24px;color:#111;font-weight:bold;font-family:'Liberation Serif', serif;width:59px;overflow:hidden;letter-spacing:0.4px;">1. 1. 1. 1</div>
<div class="t" style="left:1683px;top:77px;font-size:15px;line-height:24px;height:24px;color:#111;font-weight:bold;font-family:'Liberation Serif', serif;width:59px;overflow:hidden;letter-spacing:0.4px;">1. 1. 1. 1</div>
<div class="t" style="left:1755px;top:77px;font-size:15px;line-height:24px;height:24px;color:#111;font-weight:bold;font-family:'Liberation Serif', serif;width:59px;overflow:hidden;letter-spacing:0.4px;">1. 1. 1. 1</div>
<div class="t" style="left:1827px;top:77px;font-size:15px;line-height:24px;height:24px;color:#111;font-weight:bold;font-family:'Liberation Serif', serif;width:59px;overflow:hidden;letter-spacing:0.4px;">1. 1. 1. 1</div>
<div class="t" style="left:1899px;top:77px;font-size:15px;line-height:24px;height:24px;color:#111;font-weight:bold;font-family:'Liberation Serif', serif;width:59px;overflow:hidden;letter-spacing:0.4px;">1. 1. 1. 1</div>
<div class="t" style="left:1971px;top:70.5px;font-size:30px;line-height:30px;height:30px;color:#3a3a3a;height:22px;overflow:hidden;width:60px;letter-spacing:-0.5px;">AaB</div>
<div class="t" style="left:2042px;top:78px;font-size:16.5px;line-height:22px;height:22px;color:#5b8cc9;letter-spacing:0.6px;">AaBbC</div>
<div style="left:2109px;top:68px;width:24px;height:60px;background:#f3f3f3;border:1px solid #ababab;box-sizing:border-box;"></div>
<svg style="left:2117px;top:93px;" width="8" height="8" viewBox="0 0 8 8"><path d="M0.5 1 H7.5" stroke="#444" stroke-width="1.1"/><path d="M1 3.8 L4 6.8 L7 3.8" fill="none" stroke="#444" stroke-width="1.1"/></svg>
<svg style="left:2155px;top:69px;" width="14" height="14" viewBox="0 0 14 14"><circle cx="8.6" cy="5.2" r="3.8" fill="none" stroke="#3f7bbf" stroke-width="1.7"/><path d="M5.8 8 L1.2 12.6" stroke="#3f7bbf" stroke-width="2.2"/></svg>
<div class="t" style="left:2174px;top:67.5px;font-size:12px;line-height:18px;height:18px;color:#222;width:24px;text-align-last:justify;">查找</div>
<svg style="left:2212.9px;top:73.9px;" width="7.2" height="5.2" viewBox="0 0 7.2 5.2"><path d="M1 1.1 L3.6 4.1 L6.2 1.1" fill="none" stroke="#444" stroke-width="1.1"/></svg>
<div class="t" style="left:2155px;top:90.5px;font-size:9.5px;line-height:10px;height:10px;color:#9b59b6;">ab</div>
<div class="t" style="left:2159px;top:98px;font-size:9.5px;line-height:10px;height:10px;color:#3f7bbf;font-weight:bold;">ac</div>
<svg style="left:2154px;top:100px;" width="6" height="6" viewBox="0 0 6 6"><path d="M1.5 0.5 V3.5 H5 M3.5 2 L5 3.5 L3.5 5" fill="none" stroke="#3f7bbf" stroke-width="1"/></svg>
<div class="t" style="left:2174px;top:91px;font-size:12px;line-height:18px;height:18px;color:#222;width:24px;text-align-last:justify;">替换</div>
<svg style="left:2158px;top:114px;" width="10" height="16" viewBox="0 0 10 16"><path d="M1 1 V12 L3.8 9.3 L6 14.5 L7.8 13.7 L5.6 8.6 L9.2 8.4 Z" fill="#fff" stroke="#555" stroke-width="1"/></svg>
<div class="t" style="left:2174px;top:113.5px;font-size:12px;line-height:18px;height:18px;color:#222;width:24px;text-align-last:justify;">选择</div>
<svg style="left:2201.4px;top:119.9px;" width="7.2" height="5.2" viewBox="0 0 7.2 5.2"><path d="M1 1.1 L3.6 4.1 L6.2 1.1" fill="none" stroke="#444" stroke-width="1.1"/></svg>
<div style="left:474px;top:157px;width:1751px;height:30px;background:#fcf7b6;border-top:1px solid #c49a0a;border-bottom:1px solid #c49a0a;box-sizing:border-box;"></div>
<div style="left:483px;top:161px;width:22px;height:22px;background:#467ab4;border-radius:11px;"></div>
<div style="left:492.5px;top:164.5px;width:3.4px;height:3.4px;background:#fff;border-radius:2px;"></div>
<div style="left:492.5px;top:169.5px;width:3.4px;height:10px;background:#fff;"></div>
<div class="t" style="left:514px;top:162.5px;font-size:12px;line-height:18px;height:18px;color:#333;width:95px;text-align-last:justify;font-weight:bold;">获取正版 OFFICE</div>
<div class="t" style="left:619px;top:162.5px;font-size:12px;line-height:18px;height:18px;color:#333;width:547px;text-align-last:justify;">你的许可证并非正版，你可能是盗版软件的受害者。立即通过正版 Office 避免中断并使文件保持安全。</div>
<div style="left:1175px;top:160px;width:120px;height:23px;background:#fdfdfd;border:1px solid #ababab;box-sizing:border-box;"></div>
<div class="t" style="left:1191px;top:162px;font-size:12px;line-height:18px;height:18px;color:#333;width:86px;text-align-last:justify;">获取正版 Office</div>
<div style="left:1304px;top:160px;width:106px;height:23px;background:#fdfdfd;border:1px solid #ababab;box-sizing:border-box;"></div>
<div class="t" style="left:1320px;top:162px;font-size:12px;line-height:18px;height:18px;color:#333;width:72px;text-align-last:justify;">了解详细信息</div>
<div style="left:474px;top:187px;width:1751px;height:829px;background:#e6e6e6;"></div>
<div style="left:823px;top:189px;width:1px;height:827px;background:#ababab;"></div>
<div class="t" style="left:488px;top:199.5px;font-size:21px;line-height:28px;height:28px;color:#333;width:42px;text-align-last:justify;">导航</div>
<svg style="left:752px;top:206px;" width="14" height="8" viewBox="0 0 14 8"><path d="M0.8 0.8 L7 7 L13.2 0.8" fill="none" stroke="#444" stroke-width="1.2"/></svg>
<svg style="left:794px;top:204px;" width="12" height="12" viewBox="0 0 12 12"><path d="M1 1 L11 11 M11 1 L1 11" fill="none" stroke="#444" stroke-width="1.2"/></svg>
<div style="left:488px;top:243px;width:317px;height:26px;background:#fff;border:1px solid #ababab;box-sizing:border-box;"></div>
<div class="t" style="left:496px;top:246px;font-size:12px;line-height:18px;height:18px;color:#666;width:72px;text-align-last:justify;">在文档中搜索</div>
<svg style="left:776px;top:248px;" width="15" height="15" viewBox="0 0 15 15"><circle cx="9" cy="5.8" r="4.1" fill="none" stroke="#2b579a" stroke-width="1.8"/><path d="M6 8.8 L1.4 13.4" stroke="#2b579a" stroke-width="2.2"/></svg>
<svg style="left:795.1px;top:254.6px;" width="6.8" height="4.8" viewBox="0 0 6.8 4.8"><path d="M1 0.8999999999999999 L3.4 3.9 L5.8 0.8999999999999999" fill="none" stroke="#333" stroke-width="1.2"/></svg>
<div class="t" style="left:489px;top:286px;font-size:12px;line-height:18px;height:18px;color:#2b579a;width:24px;text-align-last:justify;font-weight:bold;">标题</div>
<div style="left:488px;top:309px;width:26px;height:3px;background:#2b579a;"></div>
<div class="t" style="left:538px;top:286px;font-size:12px;line-height:18px;height:18px;color:#444;width:24px;text-align-last:justify;">页面</div>
<div class="t" style="left:587px;top:286px;font-size:12px;line-height:18px;height:18px;color:#444;width:24px;text-align-last:justify;">结果</div>
<div style="left:503px;top:316px;width:290px;height:18px;background:#fff;border:1px solid #c6c6c6;box-sizing:border-box;"></div>
<svg style="left:643px;top:321px;" width="8" height="8" viewBox="0 0 8 8"><path d="M0.5 1 H7.5" stroke="#444" stroke-width="1.2"/><path d="M0.8 7 H7.2 L4 3 Z" fill="#444"/></svg>
<div style="left:504px;top:334px;width:288px;height:20px;background:#c2d5f2;"></div>
<div class="t" style="width:51.6px;text-align-last:justify;left:509px;top:334.5px;font-size:12px;line-height:18px;height:18px;color:#444;">一 投标函</div>
<div class="t" style="width:207.6px;text-align-last:justify;left:509px;top:355.5px;font-size:12px;line-height:18px;height:18px;color:#444;">二 法定代表人（单位负责人）身份证明</div>
<div class="t" style="width:75.6px;text-align-last:justify;left:509px;top:376.5px;font-size:12px;line-height:18px;height:18px;color:#444;">三 授权委托书</div>
<div class="t" style="width:75.6px;text-align-last:justify;left:509px;top:397.5px;font-size:12px;line-height:18px;height:18px;color:#444;">四 投标保证金</div>
<svg style="left:492px;top:423.5px;" width="8" height="8" viewBox="0 0 8 8"><path d="M7 0.5 V7 H0.5 Z" fill="#444"/></svg>
<div class="t" style="width:123.6px;text-align-last:justify;left:509px;top:418.5px;font-size:12px;line-height:18px;height:18px;color:#444;">五 投标响应表及偏差表</div>
<div class="t" style="width:46.3px;text-align-last:justify;left:525px;top:439.5px;font-size:12px;line-height:18px;height:18px;color:#444;">1 响应表</div>
<div class="t" style="width:46.3px;text-align-last:justify;left:525px;top:460.5px;font-size:12px;line-height:18px;height:18px;color:#444;">2 偏差表</div>
<svg style="left:492px;top:486.5px;" width="8" height="8" viewBox="0 0 8 8"><path d="M7 0.5 V7 H0.5 Z" fill="#444"/></svg>
<div class="t" style="width:51.6px;text-align-last:justify;left:509px;top:481.5px;font-size:12px;line-height:18px;height:18px;color:#444;">六 报价表</div>
<div class="t" style="width:70.3px;text-align-last:justify;left:525px;top:502.5px;font-size:12px;line-height:18px;height:18px;color:#444;">1 开标一览表</div>
<svg style="left:492px;top:528.5px;" width="8" height="8" viewBox="0 0 8 8"><path d="M7 0.5 V7 H0.5 Z" fill="#444"/></svg>
<div class="t" style="width:87.6px;text-align-last:justify;left:509px;top:523.5px;font-size:12px;line-height:18px;height:18px;color:#444;">七 资格审查资料</div>
<svg style="left:508px;top:549.5px;" width="8" height="8" viewBox="0 0 8 8"><path d="M7 0.5 V7 H0.5 Z" fill="#444"/></svg>
<div class="t" style="width:70.3px;text-align-last:justify;left:525px;top:544.5px;font-size:12px;line-height:18px;height:18px;color:#444;">1 基本情况表</div>
<div class="t" style="width:68.3px;text-align-last:justify;left:542px;top:565.5px;font-size:12px;line-height:18px;height:18px;color:#444;">1.1 营业执照</div>
<div class="t" style="width:80.3px;text-align-last:justify;left:542px;top:586.5px;font-size:12px;line-height:18px;height:18px;color:#444;">1.2 开户许可证</div>
<div class="t" style="width:140.3px;text-align-last:justify;left:542px;top:607.5px;font-size:12px;line-height:18px;height:18px;color:#444;">1.3 质量管理体系认证证书</div>
<div class="t" style="width:140.3px;text-align-last:justify;left:542px;top:628.5px;font-size:12px;line-height:18px;height:18px;color:#444;">1.4 环境管理体系认证证书</div>
<div class="t" style="width:188.3px;text-align-last:justify;left:542px;top:649.5px;font-size:12px;line-height:18px;height:18px;color:#444;">1.5 职业健康安全管理体系认证证书</div>
<svg style="left:508px;top:675.5px;" width="8" height="8" viewBox="0 0 8 8"><path d="M7 0.5 V7 H0.5 Z" fill="#444"/></svg>
<div class="t" style="width:94.3px;text-align-last:justify;left:525px;top:670.5px;font-size:12px;line-height:18px;height:18px;color:#444;">2 近年财务状况表</div>
<div class="t" style="width:119.0px;text-align-last:justify;left:542px;top:691.5px;font-size:12px;line-height:18px;height:18px;color:#444;">2.1 2024年度审计报告</div>
<svg style="left:508px;top:717.5px;" width="8" height="8" viewBox="0 0 8 8"><path d="M7 0.5 V7 H0.5 Z" fill="#444"/></svg>
<div class="t" style="width:154.3px;text-align-last:justify;left:525px;top:712.5px;font-size:12px;line-height:18px;height:18px;color:#444;">3 近年发生的诉讼及仲裁情况</div>
<div class="t" style="width:56.3px;text-align-last:justify;left:542px;top:733.5px;font-size:12px;line-height:18px;height:18px;color:#444;">3.1 无诉讼</div>
<div class="t" style="width:56.3px;text-align-last:justify;left:542px;top:754.5px;font-size:12px;line-height:18px;height:18px;color:#444;">3.2 无仲裁</div>
<svg style="left:492px;top:780.5px;" width="8" height="8" viewBox="0 0 8 8"><path d="M7 0.5 V7 H0.5 Z" fill="#444"/></svg>
<div class="t" style="width:147.6px;text-align-last:justify;left:509px;top:775.5px;font-size:12px;line-height:18px;height:18px;color:#444;">八 技术性能指标的详细描述</div>
<svg style="left:508px;top:801.5px;" width="8" height="8" viewBox="0 0 8 8"><path d="M7 0.5 V7 H0.5 Z" fill="#444"/></svg>
<div class="t" style="width:58.3px;text-align-last:justify;left:525px;top:796.5px;font-size:12px;line-height:18px;height:18px;color:#444;">1 技术要求</div>
<div class="t" style="width:164.3px;text-align-last:justify;left:542px;top:817.5px;font-size:12px;line-height:18px;height:18px;color:#444;">1.1 集中采购玻璃仪器技术要求</div>
<div class="t" style="width:116.3px;text-align-last:justify;left:542px;top:838.5px;font-size:12px;line-height:18px;height:18px;color:#444;">1.2 石英量筒技术要求</div>
<div class="t" style="width:116.3px;text-align-last:justify;left:542px;top:859.5px;font-size:12px;line-height:18px;height:18px;color:#444;">1.3 石英套管技术要求</div>
<div class="t" style="width:128.3px;text-align-last:justify;left:542px;top:880.5px;font-size:12px;line-height:18px;height:18px;color:#444;">1.4 水分接收器技术要求</div>
<div class="t" style="width:128.3px;text-align-last:justify;left:542px;top:901.5px;font-size:12px;line-height:18px;height:18px;color:#444;">1.5 水分接收器技术要求</div>
<div class="t" style="width:128.3px;text-align-last:justify;left:542px;top:922.5px;font-size:12px;line-height:18px;height:18px;color:#444;">1.6 脂肪抽出器技术要求</div>
<div class="t" style="width:164.3px;text-align-last:justify;left:542px;top:943.5px;font-size:12px;line-height:18px;height:18px;color:#444;">1.7 集中采购玻璃仪器技术要求</div>
<div class="t" style="width:140.3px;text-align-last:justify;left:542px;top:964.5px;font-size:12px;line-height:18px;height:18px;color:#444;">1.8 铜液体采样器技术要求</div>
<div class="t" style="width:128.3px;text-align-last:justify;left:542px;top:985.5px;font-size:12px;line-height:18px;height:18px;color:#444;">1.9 脂肪抽出器技术要求</div>
<div style="left:824px;top:188px;width:29px;height:27px;background:#d4d4d4;"></div>
<div style="left:827px;top:191px;width:21px;height:20px;background:#fbfbfb;"></div>
<svg style="left:834px;top:198px;" width="8" height="8" viewBox="0 0 8 8"><path d="M1.2 0.5 V6 H7" fill="none" stroke="#555" stroke-width="1.6"/></svg>
<div style="left:829px;top:217px;width:17px;height:799px;background:#fff;"></div>
<div style="left:829px;top:217px;width:17px;height:5px;background:#c6c6c6;"></div>
<div style="left:837px;top:232px;width:5px;height:1px;background:#444;"></div>
<div style="left:837px;top:255px;width:5px;height:1px;background:#444;"></div>
<div style="left:837px;top:277px;width:5px;height:1px;background:#444;"></div>
<div style="left:837px;top:300px;width:5px;height:1px;background:#444;"></div>
<div style="left:837px;top:322px;width:5px;height:1px;background:#444;"></div>
<div style="left:837px;top:344px;width:5px;height:1px;background:#444;"></div>
<div style="left:837px;top:367px;width:5px;height:1px;background:#444;"></div>
<div style="left:837px;top:389px;width:5px;height:1px;background:#444;"></div>
<div style="left:837px;top:412px;width:5px;height:1px;background:#444;"></div>
<div style="left:837px;top:434px;width:5px;height:1px;background:#444;"></div>
<div style="left:837px;top:457px;width:5px;height:1px;background:#444;"></div>
<div style="left:837px;top:479px;width:5px;height:1px;background:#444;"></div>
<div style="left:837px;top:502px;width:5px;height:1px;background:#444;"></div>
<div style="left:837px;top:524px;width:5px;height:1px;background:#444;"></div>
<div style="left:837px;top:547px;width:5px;height:1px;background:#444;"></div>
<div style="left:837px;top:569px;width:5px;height:1px;background:#444;"></div>
<div style="left:837px;top:591px;width:5px;height:1px;background:#444;"></div>
<div style="left:837px;top:614px;width:5px;height:1px;background:#444;"></div>
<div style="left:837px;top:636px;width:5px;height:1px;background:#444;"></div>
<div style="left:837px;top:659px;width:5px;height:1px;background:#444;"></div>
<div style="left:837px;top:681px;width:5px;height:1px;background:#444;"></div>
<div style="left:837px;top:704px;width:5px;height:1px;background:#444;"></div>
<div style="left:837px;top:726px;width:5px;height:1px;background:#444;"></div>
<div style="left:837px;top:749px;width:5px;height:1px;background:#444;"></div>
<div style="left:837px;top:771px;width:5px;height:1px;background:#444;"></div>
<div style="left:837px;top:793px;width:5px;height:1px;background:#444;"></div>
<div style="left:837px;top:816px;width:5px;height:1px;background:#444;"></div>
<div style="left:837px;top:838px;width:5px;height:1px;background:#444;"></div>
<div style="left:837px;top:861px;width:5px;height:1px;background:#444;"></div>
<div style="left:837px;top:883px;width:5px;height:1px;background:#444;"></div>
<div style="left:837px;top:906px;width:5px;height:1px;background:#444;"></div>
<div style="left:837px;top:928px;width:5px;height:1px;background:#444;"></div>
<div style="left:837px;top:951px;width:5px;height:1px;background:#444;"></div>
<div style="left:837px;top:973px;width:5px;height:1px;background:#444;"></div>
<div style="left:837px;top:996px;width:5px;height:1px;background:#444;"></div>
<div class="t" style="left:829px;top:259.9px;width:20px;height:12px;line-height:12px;font-size:9.5px;color:#555;text-align:center;transform:rotate(-90deg);">2</div>
<div class="t" style="left:829px;top:304.8px;width:20px;height:12px;line-height:12px;font-size:9.5px;color:#555;text-align:center;transform:rotate(-90deg);">4</div>
<div class="t" style="left:829px;top:349.7px;width:20px;height:12px;line-height:12px;font-size:9.5px;color:#555;text-align:center;transform:rotate(-90deg);">6</div>
<div class="t" style="left:829px;top:394.6px;width:20px;height:12px;line-height:12px;font-size:9.5px;color:#555;text-align:center;transform:rotate(-90deg);">8</div>
<div class="t" style="left:829px;top:439.5px;width:20px;height:12px;line-height:12px;font-size:9.5px;color:#555;text-align:center;transform:rotate(-90deg);">10</div>
<div class="t" style="left:829px;top:484.4px;width:20px;height:12px;line-height:12px;font-size:9.5px;color:#555;text-align:center;transform:rotate(-90deg);">12</div>
<div class="t" style="left:829px;top:529.3px;width:20px;height:12px;line-height:12px;font-size:9.5px;color:#555;text-align:center;transform:rotate(-90deg);">14</div>
<div class="t" style="left:829px;top:574.2px;width:20px;height:12px;line-height:12px;font-size:9.5px;color:#555;text-align:center;transform:rotate(-90deg);">16</div>
<div class="t" style="left:829px;top:619.1px;width:20px;height:12px;line-height:12px;font-size:9.5px;color:#555;text-align:center;transform:rotate(-90deg);">18</div>
<div class="t" style="left:829px;top:664px;width:20px;height:12px;line-height:12px;font-size:9.5px;color:#555;text-align:center;transform:rotate(-90deg);">20</div>
<div class="t" style="left:829px;top:708.9px;width:20px;height:12px;line-height:12px;font-size:9.5px;color:#555;text-align:center;transform:rotate(-90deg);">22</div>
<div class="t" style="left:829px;top:753.8px;width:20px;height:12px;line-height:12px;font-size:9.5px;color:#555;text-align:center;transform:rotate(-90deg);">24</div>
<div class="t" style="left:829px;top:798.7px;width:20px;height:12px;line-height:12px;font-size:9.5px;color:#555;text-align:center;transform:rotate(-90deg);">26</div>
<div class="t" style="left:829px;top:843.6px;width:20px;height:12px;line-height:12px;font-size:9.5px;color:#555;text-align:center;transform:rotate(-90deg);">28</div>
<div class="t" style="left:829px;top:888.5px;width:20px;height:12px;line-height:12px;font-size:9.5px;color:#555;text-align:center;transform:rotate(-90deg);">30</div>
<div class="t" style="left:829px;top:933.4px;width:20px;height:12px;line-height:12px;font-size:9.5px;color:#555;text-align:center;transform:rotate(-90deg);">32</div>
<div class="t" style="left:829px;top:978.3px;width:20px;height:12px;line-height:12px;font-size:9.5px;color:#555;text-align:center;transform:rotate(-90deg);">34</div>
<div style="left:1185px;top:192px;width:859px;height:16px;background:#fff;"></div>
<div style="left:1185px;top:192px;width:101px;height:16px;background:#c6c6c6;"></div>
<div style="left:1942px;top:192px;width:102px;height:16px;background:#c6c6c6;"></div>
<div class="t" style="left:1307.8px;top:194px;width:20px;height:13px;line-height:13px;font-size:9.5px;color:#555;text-align:center;">2</div>
<div class="t" style="left:1338.1px;top:194px;width:20px;height:13px;line-height:13px;font-size:9.5px;color:#555;text-align:center;">4</div>
<div class="t" style="left:1368.4px;top:194px;width:20px;height:13px;line-height:13px;font-size:9.5px;color:#555;text-align:center;">6</div>
<div class="t" style="left:1398.7px;top:194px;width:20px;height:13px;line-height:13px;font-size:9.5px;color:#555;text-align:center;">8</div>
<div class="t" style="left:1429px;top:194px;width:20px;height:13px;line-height:13px;font-size:9.5px;color:#555;text-align:center;">10</div>
<div class="t" style="left:1459.3px;top:194px;width:20px;height:13px;line-height:13px;font-size:9.5px;color:#555;text-align:center;">12</div>
<div class="t" style="left:1489.6px;top:194px;width:20px;height:13px;line-height:13px;font-size:9.5px;color:#555;text-align:center;">14</div>
<div class="t" style="left:1519.9px;top:194px;width:20px;height:13px;line-height:13px;font-size:9.5px;color:#555;text-align:center;">16</div>
<div class="t" style="left:1550.2px;top:194px;width:20px;height:13px;line-height:13px;font-size:9.5px;color:#555;text-align:center;">18</div>
<div class="t" style="left:1580.5px;top:194px;width:20px;height:13px;line-height:13px;font-size:9.5px;color:#555;text-align:center;">20</div>
<div class="t" style="left:1610.8px;top:194px;width:20px;height:13px;line-height:13px;font-size:9.5px;color:#555;text-align:center;">22</div>
<div class="t" style="left:1641.1px;top:194px;width:20px;height:13px;line-height:13px;font-size:9.5px;color:#555;text-align:center;">24</div>
<div class="t" style="left:1671.4px;top:194px;width:20px;height:13px;line-height:13px;font-size:9.5px;color:#555;text-align:center;">26</div>
<div class="t" style="left:1701.7px;top:194px;width:20px;height:13px;line-height:13px;font-size:9.5px;color:#555;text-align:center;">28</div>
<div class="t" style="left:1732px;top:194px;width:20px;height:13px;line-height:13px;font-size:9.5px;color:#555;text-align:center;">30</div>
<div class="t" style="left:1762.3px;top:194px;width:20px;height:13px;line-height:13px;font-size:9.5px;color:#555;text-align:center;">32</div>
<div class="t" style="left:1792.6px;top:194px;width:20px;height:13px;line-height:13px;font-size:9.5px;color:#555;text-align:center;">34</div>
<div class="t" style="left:1822.9px;top:194px;width:20px;height:13px;line-height:13px;font-size:9.5px;color:#555;text-align:center;">36</div>
<div class="t" style="left:1853.2px;top:194px;width:20px;height:13px;line-height:13px;font-size:9.5px;color:#555;text-align:center;">38</div>
<div class="t" style="left:1883.5px;top:194px;width:20px;height:13px;line-height:13px;font-size:9.5px;color:#555;text-align:center;">40</div>
<div class="t" style="left:1913.8px;top:194px;width:20px;height:13px;line-height:13px;font-size:9.5px;color:#555;text-align:center;">42</div>
<div class="t" style="left:1944.1px;top:194px;width:20px;height:13px;line-height:13px;font-size:9.5px;color:#555;text-align:center;">44</div>
<div class="t" style="left:1974.4px;top:194px;width:20px;height:13px;line-height:13px;font-size:9.5px;color:#555;text-align:center;">46</div>
<div class="t" style="left:2004.7px;top:194px;width:20px;height:13px;line-height:13px;font-size:9.5px;color:#555;text-align:center;">48</div>
<div class="t" style="left:1247.2px;top:194px;width:20px;height:13px;line-height:13px;font-size:9.5px;color:#555;text-align:center;">2</div>
<div class="t" style="left:1216.9px;top:194px;width:20px;height:13px;line-height:13px;font-size:9.5px;color:#555;text-align:center;">4</div>
<div class="t" style="left:1186.6px;top:194px;width:20px;height:13px;line-height:13px;font-size:9.5px;color:#555;text-align:center;">6</div>
<div style="left:1186px;top:217px;width:858px;height:799px;background:#fff;border-left:1px solid #c2c2c2;border-right:1px solid #c2c2c2;box-sizing:border-box;"></div>
<svg style="left:1282px;top:189px;" width="12" height="11" viewBox="0 0 12 11"><path d="M0.5 0.5 H10.5 V4.5 L5.5 9.5 L0.5 4.5 Z" fill="#fff" stroke="#777" stroke-width="1"/></svg>
<svg style="left:1312px;top:200px;" width="13" height="17" viewBox="0 0 13 17"><path d="M1 16 V6.5 L6 1.2 L11 6.5 V16 Z M1 10.5 H11" fill="#fff" stroke="#777" stroke-width="1"/></svg>
<svg style="left:1937px;top:200px;" width="12" height="11" viewBox="0 0 12 11"><path d="M0.5 10 V6 L5.5 1 L10.5 6 V10 Z" fill="#fff" stroke="#777" stroke-width="1"/></svg>
<div style="left:1262px;top:220px;width:27px;height:1px;background:#a8a8a8;"></div>
<div style="left:1288px;top:217px;width:1px;height:4px;background:#a8a8a8;"></div>
<div style="left:1942px;top:220px;width:27px;height:1px;background:#a8a8a8;"></div>
<div style="left:1942px;top:217px;width:1px;height:4px;background:#a8a8a8;"></div>
<div style="left:1280px;top:241px;width:4px;height:4px;background:#000;"></div>
<div class="t" style="left:1288px;top:221.5px;font-size:21px;line-height:30px;height:30px;color:#000;width:97px;text-align-last:justify;">一 投标函</div>
<svg style="left:1387px;top:230.7px;" width="13.9" height="13.0" viewBox="0 0 13.9 13.0"><path d="M12.615 0.58 V6.96 H1.74 M5.365 2.175 L1.305 6.96 L5.365 11.745" fill="none" stroke="#a0a0a0" stroke-width="1.479"/></svg>
<div style="left:1621px;top:341px;width:202px;height:21px;background:#ffff00;"></div>
<div class="t" style="left:1317.5px;top:272.8px;font-size:14.5px;line-height:22px;height:22px;color:#000;width:242.4px;text-align-last:justify;font-weight:bold;text-decoration:underline;text-decoration-thickness:1px;text-underline-offset:2px;">辽河石油勘探局有限公司物资分公司</div>
<div class="t" style="left:1559.9px;top:272.8px;font-size:14.5px;line-height:22px;height:22px;color:#000;width:121.2px;text-align-last:justify;">（招标人名称）：</div>
<svg style="left:1681px;top:279.5px;" width="9.6" height="9.0" viewBox="0 0 9.6 9.0"><path d="M8.7 0.4 V4.8 H1.2 M3.7 1.5 L0.9 4.8 L3.7 8.1" fill="none" stroke="#989898" stroke-width="1.2"/></svg>
<div class="t" style="left:1318.5px;top:306.6px;font-size:14.5px;line-height:22px;height:22px;color:#000;width:143.9px;text-align-last:justify;"><span class="s">1</span>．我方已仔细研究了</div>
<div class="t" style="left:1462.4px;top:306.6px;font-size:14.5px;line-height:22px;height:22px;color:#000;width:386.3px;text-align-last:justify;font-weight:bold;text-decoration:underline;text-decoration-thickness:1px;text-underline-offset:2px;"><span class="s">2025</span>年二级物资集中采购项目<span class="s">JC2025-WII-A44-01</span>玻璃仪器</div>
<div class="t" style="left:1848.8px;top:306.6px;font-size:14.5px;line-height:22px;height:22px;color:#000;width:90.9px;text-align-last:justify;">（项目名称）</div>
<div class="t" style="left:1287.6px;top:340.4px;font-size:14.5px;line-height:22px;height:22px;color:#000;width:333.3px;text-align-last:justify;">采购招标项目招标文件的全部内容，愿意以人民币</div>
<div class="t" style="left:1620.9px;top:340.4px;font-size:14.5px;line-height:22px;height:22px;color:#000;width:60.6px;text-align-last:justify;">（大写）</div>
<div style="left:1682px;top:360px;width:52px;height:1px;background:#000;"></div>
<div class="t" style="left:1733.5px;top:340.4px;font-size:14.5px;line-height:22px;height:22px;color:#000;width:22.7px;text-align-last:justify;">（<span class="s">¥</span></div>
<div style="left:1757px;top:360px;width:52px;height:1px;background:#000;"></div>
<div class="t" style="left:1808.2px;top:340.4px;font-size:14.5px;line-height:22px;height:22px;color:#000;width:15.2px;text-align-last:justify;">）</div>
<div class="t" style="left:1823.4px;top:340.4px;font-size:14.5px;line-height:22px;height:22px;color:#000;width:121.2px;text-align-last:justify;">的投标总报价（其</div>
<div class="t" style="left:1288px;top:374.2px;font-size:14.5px;line-height:22px;height:22px;color:#000;width:113.6px;text-align-last:justify;">中<span class="s">,</span>增值税税率为</div>
<div class="t" style="left:1401.6px;top:374.2px;font-size:14.5px;line-height:22px;height:22px;color:#000;width:22.7px;text-align-last:justify;font-weight:bold;text-decoration:underline;text-decoration-thickness:1px;text-underline-offset:2px;"><span class="s">13%</span></div>
<div class="t" style="left:1424.3px;top:374.2px;font-size:14.5px;line-height:22px;height:22px;color:#000;width:37.9px;text-align-last:justify;"><span class="s">)</span>提供</div>
<div class="t" style="left:1462.2px;top:374.2px;font-size:14.5px;line-height:22px;height:22px;color:#000;width:227.2px;text-align-last:justify;font-weight:bold;text-decoration:underline;text-decoration-thickness:1px;text-underline-offset:2px;">玻璃仪器及技术服务和质保期服务</div>
<div class="t" style="left:1689.5px;top:374.2px;font-size:14.5px;line-height:22px;height:22px;color:#000;width:257.6px;text-align-last:justify;"><span class="s">(</span>设备名称及技术服务和质保期服务<span class="s">)</span>，</div>
<div class="t" style="left:1288px;top:408px;font-size:14.5px;line-height:22px;height:22px;color:#000;width:166.7px;text-align-last:justify;">并按合同约定履行义务。</div>
<svg style="left:1455px;top:414.7px;" width="9.6" height="9.0" viewBox="0 0 9.6 9.0"><path d="M8.7 0.4 V4.8 H1.2 M3.7 1.5 L0.9 4.8 L3.7 8.1" fill="none" stroke="#989898" stroke-width="1.2"/></svg>
<div class="t" style="left:1318px;top:441.8px;font-size:14.5px;line-height:22px;height:22px;color:#000;width:234.8px;text-align-last:justify;"><span class="s">2. </span>我方的投标文件包括下列内容：</div>
<svg style="left:1553px;top:448.5px;" width="9.6" height="9.0" viewBox="0 0 9.6 9.0"><path d="M8.7 0.4 V4.8 H1.2 M3.7 1.5 L0.9 4.8 L3.7 8.1" fill="none" stroke="#989898" stroke-width="1.2"/></svg>
<div class="t" style="left:1319px;top:475.6px;font-size:14.5px;line-height:22px;height:22px;color:#000;width:83.3px;text-align-last:justify;"><span class="s">(1)</span>投标函；</div>
<svg style="left:1402px;top:482.3px;" width="9.6" height="9.0" viewBox="0 0 9.6 9.0"><path d="M8.7 0.4 V4.8 H1.2 M3.7 1.5 L0.9 4.8 L3.7 8.1" fill="none" stroke="#989898" stroke-width="1.2"/></svg>
<div class="t" style="left:1319px;top:509.4px;font-size:14.5px;line-height:22px;height:22px;color:#000;width:371.2px;text-align-last:justify;"><span class="s">(2)</span>法定代表人（单位负责人）身份证明或授权委托书；</div>
<svg style="left:1690px;top:516.1px;" width="9.6" height="9.0" viewBox="0 0 9.6 9.0"><path d="M8.7 0.4 V4.8 H1.2 M3.7 1.5 L0.9 4.8 L3.7 8.1" fill="none" stroke="#989898" stroke-width="1.2"/></svg>
<div class="t" style="left:1319px;top:577px;font-size:14.5px;line-height:22px;height:22px;color:#000;width:159.1px;text-align-last:justify;"><span class="s">(4)</span>商务和技术偏差表；</div>
<svg style="left:1478px;top:583.7px;" width="9.6" height="9.0" viewBox="0 0 9.6 9.0"><path d="M8.7 0.4 V4.8 H1.2 M3.7 1.5 L0.9 4.8 L3.7 8.1" fill="none" stroke="#989898" stroke-width="1.2"/></svg>
<div class="t" style="left:1319px;top:610.8px;font-size:14.5px;line-height:22px;height:22px;color:#000;width:83.3px;text-align-last:justify;"><span class="s">(5)</span>报价表；</div>
<svg style="left:1402px;top:617.5px;" width="9.6" height="9.0" viewBox="0 0 9.6 9.0"><path d="M8.7 0.4 V4.8 H1.2 M3.7 1.5 L0.9 4.8 L3.7 8.1" fill="none" stroke="#989898" stroke-width="1.2"/></svg>
<div class="t" style="left:1319px;top:644.6px;font-size:14.5px;line-height:22px;height:22px;color:#000;width:128.8px;text-align-last:justify;"><span class="s">(6)</span>资格审查资料；</div>
<svg style="left:1448px;top:651.3px;" width="9.6" height="9.0" viewBox="0 0 9.6 9.0"><path d="M8.7 0.4 V4.8 H1.2 M3.7 1.5 L0.9 4.8 L3.7 8.1" fill="none" stroke="#989898" stroke-width="1.2"/></svg>
<div class="t" style="left:1319px;top:678.4px;font-size:14.5px;line-height:22px;height:22px;color:#000;width:204.5px;text-align-last:justify;"><span class="s">(7)</span>技术性能指标的详细描述；</div>
<svg style="left:1524px;top:685.1px;" width="9.6" height="9.0" viewBox="0 0 9.6 9.0"><path d="M8.7 0.4 V4.8 H1.2 M3.7 1.5 L0.9 4.8 L3.7 8.1" fill="none" stroke="#989898" stroke-width="1.2"/></svg>
<div class="t" style="left:1319px;top:712.2px;font-size:14.5px;line-height:22px;height:22px;color:#000;width:128.8px;text-align-last:justify;"><span class="s">(8)</span>技术支持资料；</div>
<svg style="left:1448px;top:718.9px;" width="9.6" height="9.0" viewBox="0 0 9.6 9.0"><path d="M8.7 0.4 V4.8 H1.2 M3.7 1.5 L0.9 4.8 L3.7 8.1" fill="none" stroke="#989898" stroke-width="1.2"/></svg>
<div class="t" style="left:1319px;top:746px;font-size:14.5px;line-height:22px;height:22px;color:#000;width:219.7px;text-align-last:justify;"><span class="s">(9)</span>技术服务和质保期服务计划；</div>
<svg style="left:1539px;top:752.7px;" width="9.6" height="9.0" viewBox="0 0 9.6 9.0"><path d="M8.7 0.4 V4.8 H1.2 M3.7 1.5 L0.9 4.8 L3.7 8.1" fill="none" stroke="#989898" stroke-width="1.2"/></svg>
<div class="t" style="left:1319px;top:779.8px;font-size:14.5px;line-height:22px;height:22px;color:#000;width:106px;text-align-last:justify;"><span class="s">(10)</span>其他资料；</div>
<svg style="left:1425px;top:786.5px;" width="9.6" height="9.0" viewBox="0 0 9.6 9.0"><path d="M8.7 0.4 V4.8 H1.2 M3.7 1.5 L0.9 4.8 L3.7 8.1" fill="none" stroke="#989898" stroke-width="1.2"/></svg>
<div class="t" style="left:1319px;top:543.2px;font-size:14.5px;line-height:22px;height:22px;color:#000;width:174.2px;text-align-last:justify;"><span class="s">(3)</span>投标保证金，金额为（</div>
<div style="left:1494px;top:563px;width:24px;height:1px;background:#000;"></div>
<div class="t" style="left:1517.2px;top:543.2px;font-size:14.5px;line-height:22px;height:22px;color:#000;width:30.3px;text-align-last:justify;">）；</div>
<svg style="left:1548px;top:549.9px;" width="9.6" height="9.0" viewBox="0 0 9.6 9.0"><path d="M8.7 0.4 V4.8 H1.2 M3.7 1.5 L0.9 4.8 L3.7 8.1" fill="none" stroke="#989898" stroke-width="1.2"/></svg>
<svg style="left:1499px;top:547px;" width="12" height="15" viewBox="0 0 12 15"><path d="M2 13.5 L10 1" stroke="#000" stroke-width="1.3" fill="none"/></svg>
<div style="left:1320px;top:823px;width:2px;height:2px;background:#000;"></div>
<div style="left:1324px;top:823px;width:2px;height:2px;background:#000;"></div>
<div style="left:1328px;top:823px;width:2px;height:2px;background:#000;"></div>
<div style="left:1335px;top:823px;width:2px;height:2px;background:#000;"></div>
<div style="left:1339px;top:823px;width:2px;height:2px;background:#000;"></div>
<div style="left:1343px;top:823px;width:2px;height:2px;background:#000;"></div>
<svg style="left:1349px;top:820.3px;" width="9.6" height="9.0" viewBox="0 0 9.6 9.0"><path d="M8.7 0.4 V4.8 H1.2 M3.7 1.5 L0.9 4.8 L3.7 8.1" fill="none" stroke="#989898" stroke-width="1.2"/></svg>
<div class="t" style="left:1317.5px;top:847.4px;font-size:14.5px;line-height:22px;height:22px;color:#000;width:424.2px;text-align-last:justify;">投标文件的上述组成部分如存在内容不一致的，以投标函为准。</div>
<svg style="left:1742px;top:854.1px;" width="9.6" height="9.0" viewBox="0 0 9.6 9.0"><path d="M8.7 0.4 V4.8 H1.2 M3.7 1.5 L0.9 4.8 L3.7 8.1" fill="none" stroke="#989898" stroke-width="1.2"/></svg>
<div class="t" style="left:1317.5px;top:881.2px;font-size:14.5px;line-height:22px;height:22px;color:#000;width:537.8px;text-align-last:justify;"><span class="s">3</span>．我方承诺除商务和技术偏差表列出的偏差外，我方响应招标文件的全部要求。</div>
<svg style="left:1855px;top:887.9px;" width="9.6" height="9.0" viewBox="0 0 9.6 9.0"><path d="M8.7 0.4 V4.8 H1.2 M3.7 1.5 L0.9 4.8 L3.7 8.1" fill="none" stroke="#989898" stroke-width="1.2"/></svg>
<div class="t" style="left:1317.5px;top:915px;font-size:14.5px;line-height:22px;height:22px;color:#000;width:416.6px;text-align-last:justify;"><span class="s">4</span>．我方承诺在招标文件规定的投标有效期内不撤销投标文件。</div>
<svg style="left:1734px;top:921.7px;" width="9.6" height="9.0" viewBox="0 0 9.6 9.0"><path d="M8.7 0.4 V4.8 H1.2 M3.7 1.5 L0.9 4.8 L3.7 8.1" fill="none" stroke="#989898" stroke-width="1.2"/></svg>
<div class="t" style="left:1317.5px;top:948.8px;font-size:14.5px;line-height:22px;height:22px;color:#000;width:189.4px;text-align-last:justify;"><span class="s">5</span>．如我方中标，我方承诺：</div>
<svg style="left:1507px;top:955.5px;" width="9.6" height="9.0" viewBox="0 0 9.6 9.0"><path d="M8.7 0.4 V4.8 H1.2 M3.7 1.5 L0.9 4.8 L3.7 8.1" fill="none" stroke="#989898" stroke-width="1.2"/></svg>
<div class="t" style="left:1319px;top:982.6px;font-size:14.5px;line-height:22px;height:22px;color:#000;width:477.2px;text-align-last:justify;"><span class="s">(1)</span>在收到中标通知书后，在中标通知书规定的期限内与你方签订合同。</div>
<svg style="left:1796px;top:989.3px;" width="9.6" height="9.0" viewBox="0 0 9.6 9.0"><path d="M8.7 0.4 V4.8 H1.2 M3.7 1.5 L0.9 4.8 L3.7 8.1" fill="none" stroke="#989898" stroke-width="1.2"/></svg>
<svg style="left:1616px;top:392px;" width="47" height="4" viewBox="0 0 47 4"><path d="M0 2.5 L2 0.6 L4 2.6 L6 0.6 L8 2.6 L10 0.6 L12 2.6 L14 0.6 L16 2.6 L18 0.6 L20 2.6 L22 0.6 L24 2.6 L26 0.6 L28 2.6 L30 0.6 L32 2.6 L34 0.6 L36 2.6 L38 0.6 L40 2.6 L42 0.6 L44 2.6 L46 0.6" fill="none" stroke="#e02a2a" stroke-width="0.9"/></svg>
<svg style="left:1852px;top:392px;" width="47" height="4" viewBox="0 0 47 4"><path d="M0 2.5 L2 0.6 L4 2.6 L6 0.6 L8 2.6 L10 0.6 L12 2.6 L14 0.6 L16 2.6 L18 0.6 L20 2.6 L22 0.6 L24 2.6 L26 0.6 L28 2.6 L30 0.6 L32 2.6 L34 0.6 L36 2.6 L38 0.6 L40 2.6 L42 0.6 L44 2.6 L46 0.6" fill="none" stroke="#e02a2a" stroke-width="0.9"/></svg>
<svg style="left:1417px;top:764px;" width="47" height="4" viewBox="0 0 47 4"><path d="M0 2.5 L2 0.6 L4 2.6 L6 0.6 L8 2.6 L10 0.6 L12 2.6 L14 0.6 L16 2.6 L18 0.6 L20 2.6 L22 0.6 L24 2.6 L26 0.6 L28 2.6 L30 0.6 L32 2.6 L34 0.6 L36 2.6 L38 0.6 L40 2.6 L42 0.6 L44 2.6 L46 0.6" fill="none" stroke="#e02a2a" stroke-width="0.9"/></svg>
<div style="left:1288px;top:259px;width:413px;height:41px;border:4px solid #d0121f;box-sizing:border-box;"></div>
<div style="left:1447px;top:532px;width:149px;height:37px;border:4px solid #d0121f;box-sizing:border-box;"></div>
<div style="left:474px;top:1016px;width:1751px;height:22px;background:#f3f3f3;border-top:1px solid #c8c8c8;box-sizing:border-box;"></div>
<div class="t" style="left:486px;top:1018.5px;font-size:12px;line-height:18px;height:18px;color:#333;width:104px;text-align-last:justify;">第 7 页，共 163 页</div>
<div class="t" style="left:609px;top:1018.5px;font-size:12px;line-height:18px;height:18px;color:#333;width:75px;text-align-last:justify;">4/21126 个字</div>
<svg style="left:703px;top:1020px;" width="16" height="14" viewBox="0 0 16 14"><path d="M0.5 1.5 H5 L7 3 L9 1.5 H10.5 M0.5 1.5 V11.5 H5.5 L7 12.5 M7 3 V12.5" fill="none" stroke="#666" stroke-width="1"/><path d="M9.5 4.5 L14 10.5 M14 4.5 L9.5 10.5" stroke="#666" stroke-width="1.1" fill="none"/></svg>
<div class="t" style="left:735px;top:1018.5px;font-size:12px;line-height:18px;height:18px;color:#333;width:104px;text-align-last:justify;">简体中文(中国大陆)</div>
<div class="t" style="left:857px;top:1018.5px;font-size:12px;line-height:18px;height:18px;color:#333;width:55px;text-align-last:justify;">修订: 关闭</div>
<svg style="left:931px;top:1021px;" width="15" height="13" viewBox="0 0 15 13"><circle cx="5.5" cy="5.5" r="4.2" fill="none" stroke="#555" stroke-width="1.1"/><path d="M5.5 2.5 V8 M3.5 4.5 H7.5" stroke="#555" stroke-width="1"/><path d="M8 7 L14 12.5 M14 7 L8 12.5" stroke="#333" stroke-width="1.5"/></svg>
<div class="t" style="left:950px;top:1018.5px;font-size:12px;line-height:18px;height:18px;color:#333;width:79px;text-align-last:justify;font-weight:bold;">辅助功能: 调查</div>
<svg style="left:2102px;top:1020px;" width="14" height="14" viewBox="0 0 14 14"><path d="M0.5 0.5 H5.5 L6.5 1.5 L7.5 0.5 H12.5 V10.5 H7.5 L6.5 11.5 L5.5 10.5 H0.5 Z" fill="none" stroke="#6a6a6a" stroke-width="1"/><path d="M6.5 1.5 V13 M5 11.5 L6.5 13.3 L8 11.5" fill="none" stroke="#6a6a6a" stroke-width="1"/><path d="M2 2.5 H5 M2 4.5 H5 M2 6.5 H5 M2 8.5 H5 M8 2.5 H11 M8 4.5 H11 M8 6.5 H11 M8 8.5 H11" stroke="#6a6a6a" stroke-width="1"/></svg>
<div style="left:2129px;top:1017px;width:40px;height:21px;background:#c6c6c6;"></div>
<svg style="left:2142px;top:1020px;" width="14" height="13" viewBox="0 0 14 13"><rect x="0.5" y="0.5" width="13" height="12" fill="none" stroke="#6a6a6a" stroke-width="1"/><path d="M2.5 2.5 H11.5 M2.5 4.5 H11.5 M2.5 6.5 H11.5 M2.5 8.5 H11.5 M2.5 10.5 H11.5" stroke="#6a6a6a" stroke-width="1"/></svg>
<svg style="left:2182px;top:1020px;" width="16" height="14" viewBox="0 0 16 14"><path d="M11.5 4.5 V0.5 H0.5 V10.5 H5.5" fill="none" stroke="#6a6a6a" stroke-width="1"/><path d="M2.5 2.5 H9.5 M2.5 4.5 H8 M2.5 6.5 H6 M2.5 8.5 H5.5" stroke="#6a6a6a" stroke-width="1"/><circle cx="10.3" cy="9.2" r="3.9" fill="#767676"/><path d="M8.2 7.6 Q10.4 8.6 9.4 11.2 M10.8 6 Q10.2 8.2 13.2 8.8" fill="none" stroke="#f3f3f3" stroke-width="1"/></svg>
<div style="left:2215px;top:1026px;width:8px;height:1px;background:#333;"></div>
</body></html>
